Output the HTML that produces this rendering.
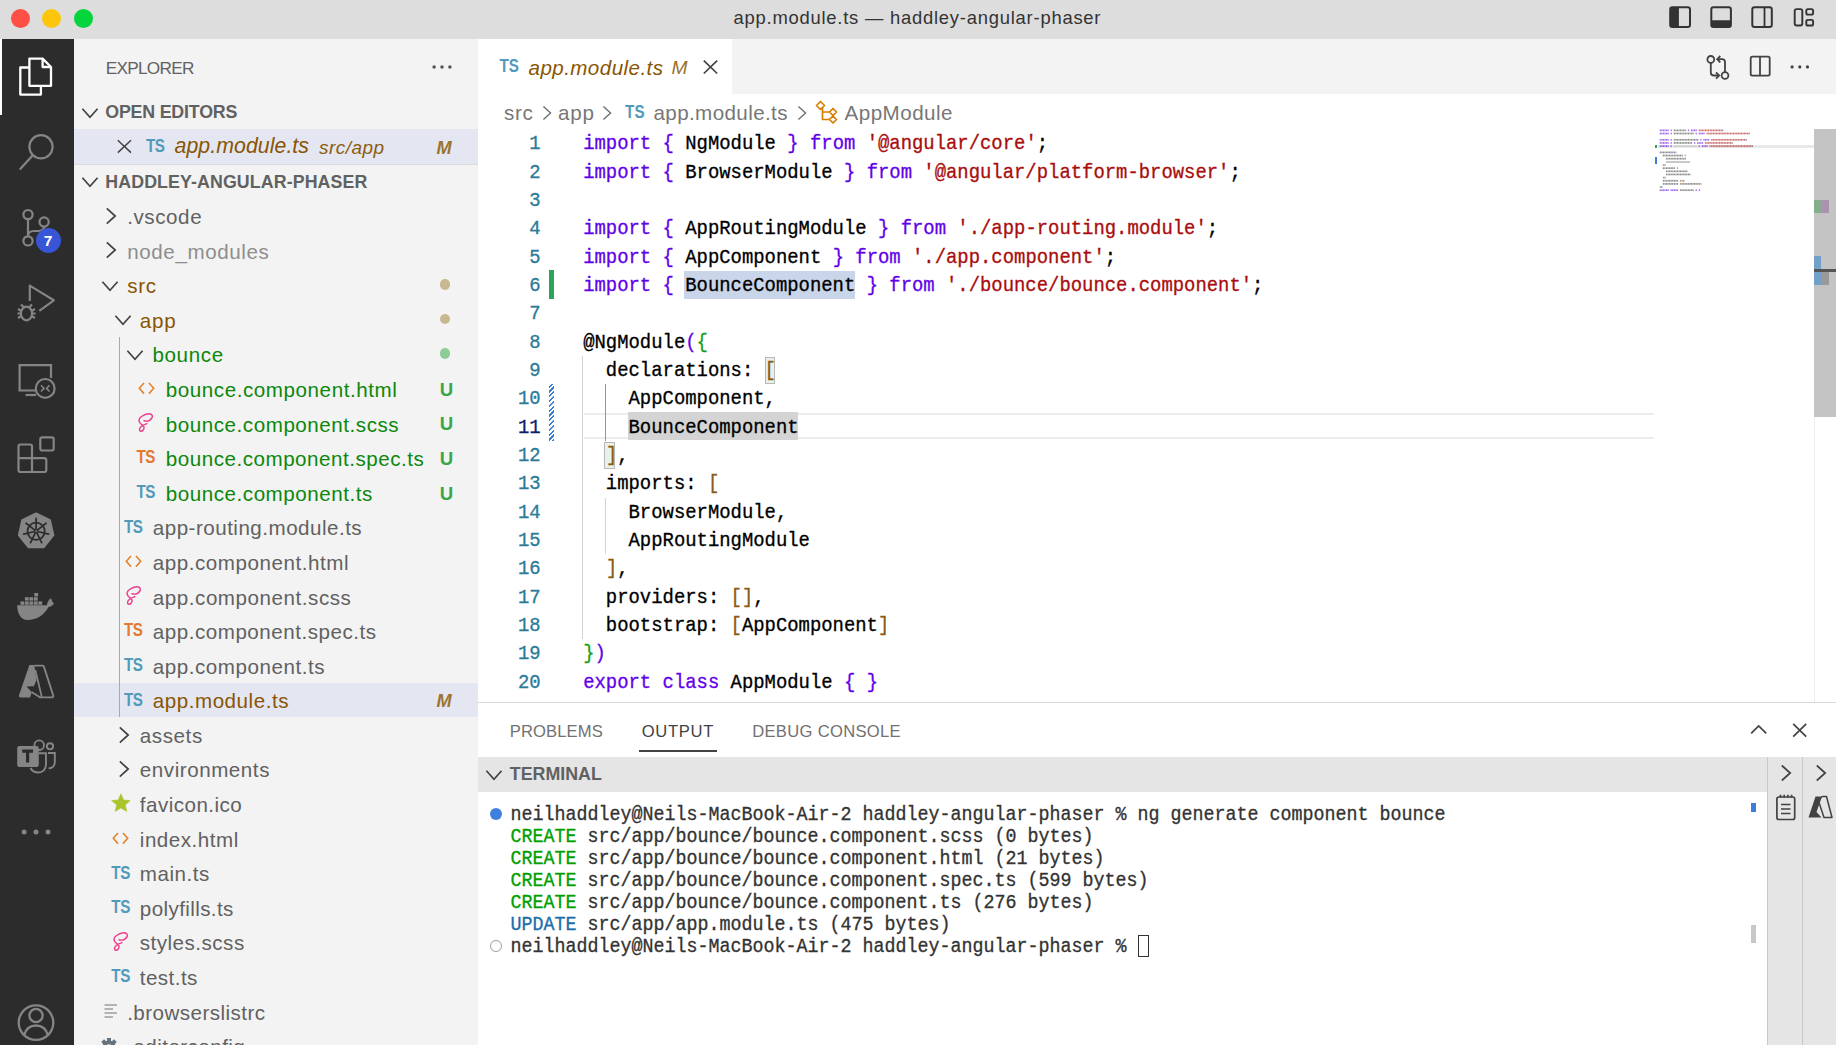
<!DOCTYPE html>
<html><head><meta charset="utf-8"><title>VS Code</title>
<style>
html,body{margin:0;padding:0;}
body{width:1836px;height:1045px;overflow:hidden;position:relative;background:#fff;font-family:'Liberation Sans', sans-serif;}
svg{display:block}
</style></head><body>
<div style="position:absolute;left:0px;top:0px;width:1836px;height:39px;background:#dddddd;"></div>
<div style="position:absolute;left:0px;top:39px;width:74px;height:1006px;background:#2c2c2c;"></div>
<div style="position:absolute;left:0px;top:39px;width:2px;height:76px;background:#ffffff;"></div>
<div style="position:absolute;left:74px;top:39px;width:404px;height:1006px;background:#f3f3f3;"></div>
<div style="position:absolute;left:478px;top:39px;width:1358px;height:55px;background:#f3f3f3;"></div>
<div style="position:absolute;left:478px;top:39px;width:254px;height:55px;background:#ffffff;"></div>
<div style="position:absolute;left:11.0px;top:9.2px;width:19px;height:19px;border-radius:50%;background:#fe5047"></div>
<div style="position:absolute;left:42.4px;top:9.2px;width:19px;height:19px;border-radius:50%;background:#fdc50b"></div>
<div style="position:absolute;left:73.9px;top:9.2px;width:19px;height:19px;border-radius:50%;background:#05d53d"></div>
<div style="position:absolute;left:733.5px;top:7.948px;line-height:20.553px;font:normal 400 18.4px 'Liberation Sans', sans-serif;line-height:20.553px;color:#333333;white-space:pre;letter-spacing:0.773px;">app.module.ts — haddley-angular-phaser</div>
<svg style="position:absolute;left:1660px;top:0px;overflow:visible" width="176" height="39" viewBox="1660 0 176 39">
<rect x="1670.2" y="7.3" width="19.8" height="19.6" rx="2.2" fill="none" stroke="#333333" stroke-width="2"/>
<rect x="1670.2" y="7.3" width="8.7" height="19.6" rx="1" fill="#333333"/>
<rect x="1711.3" y="7.3" width="19.6" height="19.6" rx="2.2" fill="none" stroke="#333333" stroke-width="2"/>
<rect x="1711.3" y="20.3" width="19.6" height="6.6" rx="1" fill="#333333"/>
<rect x="1752.3" y="7.3" width="19.5" height="19.6" rx="2.2" fill="none" stroke="#333333" stroke-width="2"/>
<line x1="1764.5" y1="7.3" x2="1764.5" y2="26.9" stroke="#333333" stroke-width="1.8"/>
<rect x="1794.7" y="9.1" width="7.6" height="16.4" rx="2" fill="none" stroke="#333333" stroke-width="1.9"/>
<rect x="1806.3" y="9.1" width="6.8" height="5.5" rx="1.6" fill="none" stroke="#333333" stroke-width="1.9"/>
<rect x="1806.3" y="19.9" width="6.8" height="5.6" rx="1.6" fill="none" stroke="#333333" stroke-width="1.9"/>
</svg>
<svg style="position:absolute;left:0px;top:39px;overflow:visible" width="74" height="1006" viewBox="0 39 74 1006">
<g fill="none" stroke="#ffffff" stroke-width="2.3" stroke-linejoin="round">
 <path d="M29.4 67.5 H20.3 V94.6 H40.9 V85.8"/>
 <path d="M29.4 58.6 H42.6 L51 67 V85.8 H29.4 Z"/>
 <path d="M42.6 58.6 V67 H51"/>
</g>
<g fill="none" stroke="#858585" stroke-width="2.2">
 <circle cx="41" cy="146.8" r="11.6"/>
 <line x1="33" y1="155" x2="19.8" y2="169.5"/>
 <circle cx="28" cy="214.6" r="4.6"/>
 <circle cx="44.1" cy="222" r="4.6"/>
 <circle cx="28" cy="240.9" r="4.6"/>
 <line x1="28" y1="219.2" x2="28" y2="236.3"/>
 <path d="M44.1 226.6 C44.1 231 40 231 34 231 C30 231 28 233 28 236.3"/>
 <path d="M29.8 301 V285.6 L53.8 300.3 L39.3 310.8" stroke-linejoin="round"/>
 <ellipse cx="26.5" cy="313.5" rx="5.6" ry="6.8"/>
 <path d="M18 309 L21.5 311 M18 318 L21.5 316 M35 309 L31.5 311 M35 318 L31.5 316 M21 304.5 L23.5 307 M32 304.5 L29.5 307 M17.5 313.5 H20.9 M32.1 313.5 H35.5"/>
 <path d="M37 390.5 H19.6 V365.2 H51 V378"/>
 <line x1="25.5" y1="395" x2="36" y2="395"/>
 <circle cx="45.2" cy="388.4" r="9.4"/>
 <path d="M41 385.3 L44 388.4 L41 391.5 M49.5 385.3 L46.5 388.4 L49.5 391.5" stroke-width="1.6"/>
 <path d="M20.5 444.5 H30 Q32 444.5 32 446.5 V458.2 H44.3 Q46.3 458.2 46.3 460.2 V470 Q46.3 472 44.3 472 H20.5 Q18.5 472 18.5 470 V446.5 Q18.5 444.5 20.5 444.5 Z M18.5 458.2 H32 V472"/>
 <rect x="40.3" y="437.3" width="13.4" height="13.2" rx="2"/>
</g>
<polygon points="36.10,513.60 49.86,520.23 53.26,535.12 43.74,547.06 28.46,547.06 18.94,535.12 22.34,520.23" fill="#858585" stroke="#858585" stroke-width="2.2" stroke-linejoin="round"/>
<g fill="none" stroke="#2c2c2c" stroke-width="1.7" stroke-linecap="round">
 <circle cx="36.1" cy="531.2" r="8.6"/>
 <path d="M36.10 528.80 L36.10 518.40 M37.98 529.70 L46.11 523.22 M38.44 531.73 L48.58 534.05 M37.14 533.36 L41.65 542.73 M35.06 533.36 L30.55 542.73 M33.76 531.73 L23.62 534.05 M34.22 529.70 L26.09 523.22"/>
 <circle cx="36.1" cy="531.2" r="1.6" stroke-width="1.4"/>
</g>
<g fill="#858585">
 <path d="M17.2 605.2 H46.8 C47.6 601.5 49.5 599 51 598.3 C51.8 600.5 52.4 602.3 54 603.6 C52.6 605.8 50.6 606.9 48.3 607.2 C44.5 614.5 37 620 27.5 620 C20.5 620 17.2 613 17.2 605.2 Z"/>
 <rect x="20.4" y="601.4" width="3.8" height="3.4"/><rect x="24.9" y="601.4" width="3.8" height="3.4"/><rect x="29.4" y="601.4" width="3.8" height="3.4"/><rect x="33.9" y="601.4" width="3.8" height="3.4"/><rect x="38.4" y="601.4" width="3.8" height="3.4"/>
 <rect x="24.9" y="597.2" width="3.8" height="3.4"/><rect x="29.4" y="597.2" width="3.8" height="3.4"/><rect x="33.9" y="597.2" width="3.8" height="3.4"/>
 <rect x="34.3" y="593" width="3.8" height="3.4"/>
 <path d="M29.4 664.9 H34.3 L36.5 680.2 L33.8 686.2 L26.6 686.4 L31.8 692.2 L30 697.5 H20.6 C19.3 697.5 18.6 696.4 19.1 695 Z"/>
</g>
<path d="M34.2 665.7 H42.6 C43.2 665.7 43.6 666 43.9 666.6 L53.2 695.4 C53.5 696.5 53 697.4 52 697.4 H40.2 L31.6 692 M35.3 670 L41.9 697.4" fill="none" stroke="#858585" stroke-width="1.8" stroke-linejoin="round"/>
<g fill="#858585">
 <rect x="17.2" y="746" width="21.6" height="21" rx="2.2"/>
</g>
<path d="M22.2 751.2 H33 M27.6 751.2 V762.5" stroke="#2c2c2c" stroke-width="3.2"/>
<g fill="none" stroke="#858585" stroke-width="1.9">
 <circle cx="39.2" cy="745.2" r="4.8"/>
 <circle cx="50" cy="746.3" r="3.1"/>
 <path d="M38.8 753.2 H46 V764.5 C46 769.5 42.5 772.5 38.5 772.5 C34.5 772.5 31.5 770 30.5 768"/>
 <path d="M48 753 H54.8 V762 C54.8 766.5 52 768.5 48.6 768.3"/>
</g>
<circle cx="24.1" cy="832" r="2.5" fill="#858585"/>
<circle cx="36" cy="832" r="2.5" fill="#858585"/>
<circle cx="48" cy="832" r="2.5" fill="#858585"/>
<g fill="none" stroke="#858585" stroke-width="2.3">
 <circle cx="36" cy="1022.6" r="17.3"/>
 <circle cx="36" cy="1015.5" r="6.6"/>
 <path d="M24 1035.5 C26 1028 30 1025.5 36 1025.5 C42 1025.5 46 1028 48 1035.5"/>
</g>
</svg>
<div style="position:absolute;left:36.2px;top:228.1px;width:25.2px;height:25.2px;border-radius:50%;background:#3855d6"></div>
<div style="position:absolute;left:43.8px;top:232.373px;line-height:17.314px;font:normal 700 15.5px 'Liberation Sans', sans-serif;line-height:17.314px;color:#ffffff;white-space:pre;">7</div>
<div style="position:absolute;left:105.8px;top:59.434px;line-height:19.212px;font:normal 400 17.2px 'Liberation Sans', sans-serif;line-height:19.212px;color:#616161;white-space:pre;letter-spacing:-0.73px;">EXPLORER</div>
<svg style="position:absolute;left:420px;top:55px;overflow:visible" width="50" height="24" viewBox="0 0 50 24"><circle cx="14.100000000000023" cy="11.9" r="1.75" fill="#555555"/><circle cx="22.0" cy="11.9" r="1.75" fill="#555555"/><circle cx="29.899999999999977" cy="11.9" r="1.75" fill="#555555"/></svg>
<svg style="position:absolute;left:79.8px;top:102.5px;overflow:visible" width="20" height="20" viewBox="0 0 20 20"><path d="M2.4000000000000004 5.8 L10 14.2 L17.6 5.8" fill="none" stroke="#424242" stroke-width="1.7"/></svg>
<div style="position:absolute;left:105.3px;top:103.191px;line-height:19.883px;font:normal 700 17.8px 'Liberation Sans', sans-serif;line-height:19.883px;color:#616161;white-space:pre;letter-spacing:-0.186px;">OPEN EDITORS</div>
<div style="position:absolute;left:74px;top:129px;width:404px;height:35px;background:#e4e6f1;"></div>
<div style="position:absolute;left:74px;top:163.6px;width:404px;height:1.2px;background:#d9d9e0;"></div>
<svg style="position:absolute;left:114px;top:137px;overflow:visible" width="20" height="20" viewBox="0 0 20 20"><path d="M3.8 3.2 L17 15.6 M17 3.2 L3.8 15.6" stroke="#424242" stroke-width="1.45"/></svg>
<div style="position:absolute;left:146px;top:137.644px;line-height:16.978px;font:normal 700 15.2px 'Liberation Sans', sans-serif;line-height:16.978px;color:#519aba;white-space:pre;letter-spacing:-0.422px;transform:scaleY(1.16);transform-origin:0 81%">TS</div>
<div style="position:absolute;left:174.5px;top:134.624px;line-height:23.792px;font:italic 400 21.3px 'Liberation Sans', sans-serif;line-height:23.792px;color:#895503;white-space:pre;letter-spacing:0.059px;">app.module.ts</div>
<div style="position:absolute;left:319px;top:136.705px;line-height:21.223px;font:italic 400 19.0px 'Liberation Sans', sans-serif;line-height:21.223px;color:#895503;white-space:pre;letter-spacing:0.448px;opacity:.95">src/app</div>
<div style="position:absolute;left:436.6px;top:137.729px;line-height:20.329px;font:italic 700 18.2px 'Liberation Sans', sans-serif;line-height:20.329px;color:#9b7430;white-space:pre;">M</div>
<svg style="position:absolute;left:79.8px;top:171.5px;overflow:visible" width="20" height="20" viewBox="0 0 20 20"><path d="M2.4000000000000004 5.8 L10 14.2 L17.6 5.8" fill="none" stroke="#424242" stroke-width="1.7"/></svg>
<div style="position:absolute;left:105.3px;top:172.991px;line-height:19.883px;font:normal 700 17.8px 'Liberation Sans', sans-serif;line-height:19.883px;color:#616161;white-space:pre;letter-spacing:0.104px;">HADDLEY-ANGULAR-PHASER</div>
<div style="position:absolute;left:74px;top:682.86px;width:404px;height:34.59px;background:#e4e6f1;"></div>
<div style="position:absolute;left:118.5px;top:336.96000000000004px;width:1.3px;height:380.49px;background:#a9a9a9;"></div>
<svg style="position:absolute;left:101px;top:205.89499999999998px;overflow:visible" width="20" height="20" viewBox="0 0 20 20"><path d="M5.8 2.4000000000000004 L14.2 10 L5.8 17.6" fill="none" stroke="#424242" stroke-width="1.7"/></svg>
<div style="position:absolute;left:127.19999999999999px;top:205.052px;line-height:23.01px;font:normal 400 20.6px 'Liberation Sans', sans-serif;line-height:23.01px;color:#616161;white-space:pre;letter-spacing:0.573px;">.vscode</div>
<svg style="position:absolute;left:101px;top:240.485px;overflow:visible" width="20" height="20" viewBox="0 0 20 20"><path d="M5.8 2.4000000000000004 L14.2 10 L5.8 17.6" fill="none" stroke="#424242" stroke-width="1.7"/></svg>
<div style="position:absolute;left:127.19999999999999px;top:239.642px;line-height:23.01px;font:normal 400 20.6px 'Liberation Sans', sans-serif;line-height:23.01px;color:#8e8e8e;white-space:pre;letter-spacing:0.597px;">node_modules</div>
<svg style="position:absolute;left:100px;top:275.575px;overflow:visible" width="20" height="20" viewBox="0 0 20 20"><path d="M2.4000000000000004 5.8 L10 14.2 L17.6 5.8" fill="none" stroke="#424242" stroke-width="1.7"/></svg>
<div style="position:absolute;left:127.19999999999999px;top:274.232px;line-height:23.01px;font:normal 400 20.6px 'Liberation Sans', sans-serif;line-height:23.01px;color:#895503;white-space:pre;letter-spacing:0.672px;">src</div>
<div style="position:absolute;left:439.90000000000003px;top:279.275px;width:10.4px;height:10.4px;border-radius:50%;background:#c8b88f"></div>
<svg style="position:absolute;left:112.5px;top:310.165px;overflow:visible" width="20" height="20" viewBox="0 0 20 20"><path d="M2.4000000000000004 5.8 L10 14.2 L17.6 5.8" fill="none" stroke="#424242" stroke-width="1.7"/></svg>
<div style="position:absolute;left:139.79999999999998px;top:308.822px;line-height:23.01px;font:normal 400 20.6px 'Liberation Sans', sans-serif;line-height:23.01px;color:#895503;white-space:pre;letter-spacing:0.828px;">app</div>
<div style="position:absolute;left:439.90000000000003px;top:313.865px;width:10.4px;height:10.4px;border-radius:50%;background:#c8b88f"></div>
<svg style="position:absolute;left:125.30000000000001px;top:344.75500000000005px;overflow:visible" width="20" height="20" viewBox="0 0 20 20"><path d="M2.4000000000000004 5.8 L10 14.2 L17.6 5.8" fill="none" stroke="#424242" stroke-width="1.7"/></svg>
<div style="position:absolute;left:152.4px;top:343.412px;line-height:23.01px;font:normal 400 20.6px 'Liberation Sans', sans-serif;line-height:23.01px;color:#0c880c;white-space:pre;letter-spacing:0.656px;">bounce</div>
<div style="position:absolute;left:439.90000000000003px;top:348.45500000000004px;width:10.4px;height:10.4px;border-radius:50%;background:#8fcc95"></div>
<svg style="position:absolute;left:137.5px;top:382.345px;overflow:visible" width="17" height="13" viewBox="0 0 17 13"><path d="M6 1 L1.3 6.3 L6 11.6 M11 1 L15.7 6.3 L11 11.6" fill="none" stroke="#e0852c" stroke-width="1.6"/></svg>
<div style="position:absolute;left:165.79999999999998px;top:378.002px;line-height:23.01px;font:normal 400 20.6px 'Liberation Sans', sans-serif;line-height:23.01px;color:#0c880c;white-space:pre;letter-spacing:0.559px;">bounce.component.html</div>
<div style="position:absolute;left:439.8px;top:379.812px;line-height:20.776px;font:normal 700 18.6px 'Liberation Sans', sans-serif;line-height:20.776px;color:#3aa64a;white-space:pre;">U</div>
<svg style="position:absolute;left:138.3px;top:414.435px;overflow:visible" width="16" height="18" viewBox="0 0 16 18"><path d="M6 6.8 C8 7.3 10 7.3 11.5 6.3 C14 4.6 15.5 2.2 13.5 0.5 C11 -0.8 6.5 0.5 3.5 2.5 C0.5 4.5 0.3 7.5 2.5 9.5 C4 10.8 5.5 11.6 6 13 C6.5 15 4.5 17.5 2.8 17.2 C1 16.8 1.2 14.5 3 12.8 C4.5 11.3 7 10.2 8.9 9.6" fill="none" stroke="#ec3d8a" stroke-width="1.45" stroke-linecap="round"/></svg>
<div style="position:absolute;left:165.79999999999998px;top:412.592px;line-height:23.01px;font:normal 400 20.6px 'Liberation Sans', sans-serif;line-height:23.01px;color:#0c880c;white-space:pre;letter-spacing:0.539px;">bounce.component.scss</div>
<div style="position:absolute;left:439.8px;top:414.402px;line-height:20.776px;font:normal 700 18.6px 'Liberation Sans', sans-serif;line-height:20.776px;color:#3aa64a;white-space:pre;">U</div>
<div style="position:absolute;left:136.5px;top:449.469px;line-height:16.978px;font:normal 700 15.2px 'Liberation Sans', sans-serif;line-height:16.978px;color:#e37933;white-space:pre;letter-spacing:-0.422px;transform:scaleY(1.16);transform-origin:0 81%">TS</div>
<div style="position:absolute;left:165.79999999999998px;top:447.182px;line-height:23.01px;font:normal 400 20.6px 'Liberation Sans', sans-serif;line-height:23.01px;color:#0c880c;white-space:pre;letter-spacing:0.516px;">bounce.component.spec.ts</div>
<div style="position:absolute;left:439.8px;top:448.992px;line-height:20.776px;font:normal 700 18.6px 'Liberation Sans', sans-serif;line-height:20.776px;color:#3aa64a;white-space:pre;">U</div>
<div style="position:absolute;left:136.5px;top:484.059px;line-height:16.978px;font:normal 700 15.2px 'Liberation Sans', sans-serif;line-height:16.978px;color:#519aba;white-space:pre;letter-spacing:-0.422px;transform:scaleY(1.16);transform-origin:0 81%">TS</div>
<div style="position:absolute;left:165.79999999999998px;top:481.772px;line-height:23.01px;font:normal 400 20.6px 'Liberation Sans', sans-serif;line-height:23.01px;color:#0c880c;white-space:pre;letter-spacing:0.531px;">bounce.component.ts</div>
<div style="position:absolute;left:439.8px;top:483.582px;line-height:20.776px;font:normal 700 18.6px 'Liberation Sans', sans-serif;line-height:20.776px;color:#3aa64a;white-space:pre;">U</div>
<div style="position:absolute;left:124px;top:518.649px;line-height:16.978px;font:normal 700 15.2px 'Liberation Sans', sans-serif;line-height:16.978px;color:#519aba;white-space:pre;letter-spacing:-0.422px;transform:scaleY(1.16);transform-origin:0 81%">TS</div>
<div style="position:absolute;left:152.79999999999998px;top:516.362px;line-height:23.01px;font:normal 400 20.6px 'Liberation Sans', sans-serif;line-height:23.01px;color:#616161;white-space:pre;letter-spacing:0.484px;">app-routing.module.ts</div>
<svg style="position:absolute;left:125px;top:555.295px;overflow:visible" width="17" height="13" viewBox="0 0 17 13"><path d="M6 1 L1.3 6.3 L6 11.6 M11 1 L15.7 6.3 L11 11.6" fill="none" stroke="#e0852c" stroke-width="1.6"/></svg>
<div style="position:absolute;left:152.79999999999998px;top:550.952px;line-height:23.01px;font:normal 400 20.6px 'Liberation Sans', sans-serif;line-height:23.01px;color:#616161;white-space:pre;letter-spacing:0.533px;">app.component.html</div>
<svg style="position:absolute;left:125.8px;top:587.385px;overflow:visible" width="16" height="18" viewBox="0 0 16 18"><path d="M6 6.8 C8 7.3 10 7.3 11.5 6.3 C14 4.6 15.5 2.2 13.5 0.5 C11 -0.8 6.5 0.5 3.5 2.5 C0.5 4.5 0.3 7.5 2.5 9.5 C4 10.8 5.5 11.6 6 13 C6.5 15 4.5 17.5 2.8 17.2 C1 16.8 1.2 14.5 3 12.8 C4.5 11.3 7 10.2 8.9 9.6" fill="none" stroke="#ec3d8a" stroke-width="1.45" stroke-linecap="round"/></svg>
<div style="position:absolute;left:152.79999999999998px;top:585.542px;line-height:23.01px;font:normal 400 20.6px 'Liberation Sans', sans-serif;line-height:23.01px;color:#616161;white-space:pre;letter-spacing:0.54px;">app.component.scss</div>
<div style="position:absolute;left:124px;top:622.419px;line-height:16.978px;font:normal 700 15.2px 'Liberation Sans', sans-serif;line-height:16.978px;color:#e37933;white-space:pre;letter-spacing:-0.422px;transform:scaleY(1.16);transform-origin:0 81%">TS</div>
<div style="position:absolute;left:152.79999999999998px;top:620.132px;line-height:23.01px;font:normal 400 20.6px 'Liberation Sans', sans-serif;line-height:23.01px;color:#616161;white-space:pre;letter-spacing:0.517px;">app.component.spec.ts</div>
<div style="position:absolute;left:124px;top:657.009px;line-height:16.978px;font:normal 700 15.2px 'Liberation Sans', sans-serif;line-height:16.978px;color:#519aba;white-space:pre;letter-spacing:-0.422px;transform:scaleY(1.16);transform-origin:0 81%">TS</div>
<div style="position:absolute;left:152.79999999999998px;top:654.722px;line-height:23.01px;font:normal 400 20.6px 'Liberation Sans', sans-serif;line-height:23.01px;color:#616161;white-space:pre;letter-spacing:0.53px;">app.component.ts</div>
<div style="position:absolute;left:124px;top:691.599px;line-height:16.978px;font:normal 700 15.2px 'Liberation Sans', sans-serif;line-height:16.978px;color:#519aba;white-space:pre;letter-spacing:-0.422px;transform:scaleY(1.16);transform-origin:0 81%">TS</div>
<div style="position:absolute;left:152.79999999999998px;top:689.312px;line-height:23.01px;font:normal 400 20.6px 'Liberation Sans', sans-serif;line-height:23.01px;color:#895503;white-space:pre;letter-spacing:0.523px;">app.module.ts</div>
<div style="position:absolute;left:436.6px;top:691.484px;line-height:20.329px;font:italic 700 18.2px 'Liberation Sans', sans-serif;line-height:20.329px;color:#9b7430;white-space:pre;">M</div>
<svg style="position:absolute;left:113.5px;top:724.745px;overflow:visible" width="20" height="20" viewBox="0 0 20 20"><path d="M5.8 2.4000000000000004 L14.2 10 L5.8 17.6" fill="none" stroke="#424242" stroke-width="1.7"/></svg>
<div style="position:absolute;left:139.79999999999998px;top:723.902px;line-height:23.01px;font:normal 400 20.6px 'Liberation Sans', sans-serif;line-height:23.01px;color:#616161;white-space:pre;letter-spacing:0.578px;">assets</div>
<svg style="position:absolute;left:113.5px;top:759.335px;overflow:visible" width="20" height="20" viewBox="0 0 20 20"><path d="M5.8 2.4000000000000004 L14.2 10 L5.8 17.6" fill="none" stroke="#424242" stroke-width="1.7"/></svg>
<div style="position:absolute;left:139.79999999999998px;top:758.492px;line-height:23.01px;font:normal 400 20.6px 'Liberation Sans', sans-serif;line-height:23.01px;color:#616161;white-space:pre;letter-spacing:0.547px;">environments</div>
<svg style="position:absolute;left:110.8px;top:793.1250000000001px;overflow:visible" width="20" height="20" viewBox="0 0 20 20"><path d="M9.9 0.8 L12.6 7 L19.2 7.6 L14.2 11.9 L15.8 18.4 L9.9 15 L4.1 18.4 L5.7 11.9 L0.6 7.6 L7.3 7 Z" fill="#a8c62c" stroke="#a8c62c" stroke-width="0.6" stroke-linejoin="round"/></svg>
<div style="position:absolute;left:139.79999999999998px;top:793.082px;line-height:23.01px;font:normal 400 20.6px 'Liberation Sans', sans-serif;line-height:23.01px;color:#616161;white-space:pre;letter-spacing:0.472px;">favicon.ico</div>
<svg style="position:absolute;left:112.3px;top:832.0150000000001px;overflow:visible" width="17" height="13" viewBox="0 0 17 13"><path d="M6 1 L1.3 6.3 L6 11.6 M11 1 L15.7 6.3 L11 11.6" fill="none" stroke="#e0852c" stroke-width="1.6"/></svg>
<div style="position:absolute;left:139.79999999999998px;top:827.672px;line-height:23.01px;font:normal 400 20.6px 'Liberation Sans', sans-serif;line-height:23.01px;color:#616161;white-space:pre;letter-spacing:0.507px;">index.html</div>
<div style="position:absolute;left:111.3px;top:864.549px;line-height:16.978px;font:normal 700 15.2px 'Liberation Sans', sans-serif;line-height:16.978px;color:#519aba;white-space:pre;letter-spacing:-0.422px;transform:scaleY(1.16);transform-origin:0 81%">TS</div>
<div style="position:absolute;left:139.79999999999998px;top:862.262px;line-height:23.01px;font:normal 400 20.6px 'Liberation Sans', sans-serif;line-height:23.01px;color:#616161;white-space:pre;letter-spacing:0.536px;">main.ts</div>
<div style="position:absolute;left:111.3px;top:899.139px;line-height:16.978px;font:normal 700 15.2px 'Liberation Sans', sans-serif;line-height:16.978px;color:#519aba;white-space:pre;letter-spacing:-0.422px;transform:scaleY(1.16);transform-origin:0 81%">TS</div>
<div style="position:absolute;left:139.79999999999998px;top:896.852px;line-height:23.01px;font:normal 400 20.6px 'Liberation Sans', sans-serif;line-height:23.01px;color:#616161;white-space:pre;letter-spacing:0.395px;">polyfills.ts</div>
<svg style="position:absolute;left:113px;top:933.2850000000001px;overflow:visible" width="16" height="18" viewBox="0 0 16 18"><path d="M6 6.8 C8 7.3 10 7.3 11.5 6.3 C14 4.6 15.5 2.2 13.5 0.5 C11 -0.8 6.5 0.5 3.5 2.5 C0.5 4.5 0.3 7.5 2.5 9.5 C4 10.8 5.5 11.6 6 13 C6.5 15 4.5 17.5 2.8 17.2 C1 16.8 1.2 14.5 3 12.8 C4.5 11.3 7 10.2 8.9 9.6" fill="none" stroke="#ec3d8a" stroke-width="1.45" stroke-linecap="round"/></svg>
<div style="position:absolute;left:139.79999999999998px;top:931.442px;line-height:23.01px;font:normal 400 20.6px 'Liberation Sans', sans-serif;line-height:23.01px;color:#616161;white-space:pre;letter-spacing:0.483px;">styles.scss</div>
<div style="position:absolute;left:111.3px;top:968.319px;line-height:16.978px;font:normal 700 15.2px 'Liberation Sans', sans-serif;line-height:16.978px;color:#519aba;white-space:pre;letter-spacing:-0.422px;transform:scaleY(1.16);transform-origin:0 81%">TS</div>
<div style="position:absolute;left:139.79999999999998px;top:966.032px;line-height:23.01px;font:normal 400 20.6px 'Liberation Sans', sans-serif;line-height:23.01px;color:#616161;white-space:pre;letter-spacing:0.445px;">test.ts</div>
<svg style="position:absolute;left:104px;top:1004.465px;overflow:visible" width="15" height="14" viewBox="0 0 15 14"><path d="M0.5 1 H13 M0.5 5 H9 M0.5 9 H13 M0.5 13 H9" stroke="#a0a0a0" stroke-width="1.7"/></svg>
<div style="position:absolute;left:127.19999999999999px;top:1000.622px;line-height:23.01px;font:normal 400 20.6px 'Liberation Sans', sans-serif;line-height:23.01px;color:#616161;white-space:pre;letter-spacing:0.456px;">.browserslistrc</div>
<svg style="position:absolute;left:99px;top:1037.055px;overflow:visible" width="20" height="20" viewBox="0 0 20 20"><g fill="#65737e"><circle cx="10" cy="10" r="6.5"/><rect x="8" y="1" width="4" height="18"/><rect x="1" y="8" width="18" height="4"/><rect x="8" y="1" width="4" height="18" transform="rotate(45 10 10)"/><rect x="8" y="1" width="4" height="18" transform="rotate(-45 10 10)"/></g><circle cx="10" cy="10" r="2.8" fill="#f3f3f3"/></svg>
<div style="position:absolute;left:127.19999999999999px;top:1035.212px;line-height:23.01px;font:normal 400 20.6px 'Liberation Sans', sans-serif;line-height:23.01px;color:#616161;white-space:pre;letter-spacing:0.453px;">.editorconfig</div>
<div style="position:absolute;left:499.5px;top:58.344px;line-height:16.978px;font:normal 700 15.2px 'Liberation Sans', sans-serif;line-height:16.978px;color:#519aba;white-space:pre;letter-spacing:0.078px;transform:scaleY(1.16);transform-origin:0 81%">TS</div>
<div style="position:absolute;left:528.5px;top:56.257px;line-height:23.01px;font:italic 400 20.6px 'Liberation Sans', sans-serif;line-height:23.01px;color:#895503;white-space:pre;letter-spacing:0.427px;">app.module.ts</div>
<div style="position:absolute;left:671.5px;top:56.524px;line-height:21.446px;font:italic 400 19.2px 'Liberation Sans', sans-serif;line-height:21.446px;color:#9a6f2a;white-space:pre;">M</div>
<svg style="position:absolute;left:700px;top:57px;overflow:visible" width="20" height="20" viewBox="0 0 20 20"><path d="M3.8 3.7 L17.2 16.5 M17.2 3.7 L3.8 16.5" stroke="#424242" stroke-width="1.7"/></svg>
<svg style="position:absolute;left:1700px;top:50px;overflow:visible" width="136" height="36" viewBox="0 0 136 36">
<g fill="none" stroke="#424242" stroke-width="1.8">
 <circle cx="10.8" cy="9.4" r="3.4"/>
 <path d="M10.8 12.8 V22.5 C10.8 24.5 12 25.5 14 25.5 H19"/>
 <path d="M16 22.3 L19.2 25.5 L16 28.7"/>
 <circle cx="25" cy="25.5" r="3.4"/>
 <path d="M25 22.1 V12 C25 10 24 9.2 22 9.2 H17.5"/>
 <path d="M20.3 6 L17.2 9.2 L20.3 12.4"/>
 <rect x="50.7" y="6.6" width="19" height="19" rx="1.6"/>
 <line x1="60" y1="6.6" x2="60" y2="25.6"/>
</g>
<circle cx="92.1" cy="16.9" r="1.6" fill="#424242"/><circle cx="99.8" cy="16.9" r="1.6" fill="#424242"/><circle cx="107.5" cy="16.9" r="1.6" fill="#424242"/>
</svg>
<div style="position:absolute;left:504px;top:100.957px;line-height:23.01px;font:normal 400 20.6px 'Liberation Sans', sans-serif;line-height:23.01px;color:#777777;white-space:pre;letter-spacing:0.672px;">src</div>
<svg style="position:absolute;left:536.5px;top:103px;overflow:visible" width="20" height="20" viewBox="0 0 20 20"><path d="M6.4 3.4000000000000004 L13.6 10 L6.4 16.6" fill="none" stroke="#6f6f6f" stroke-width="1.4"/></svg>
<div style="position:absolute;left:558px;top:100.957px;line-height:23.01px;font:normal 400 20.6px 'Liberation Sans', sans-serif;line-height:23.01px;color:#777777;white-space:pre;letter-spacing:0.828px;">app</div>
<svg style="position:absolute;left:597px;top:103px;overflow:visible" width="20" height="20" viewBox="0 0 20 20"><path d="M6.4 3.4000000000000004 L13.6 10 L6.4 16.6" fill="none" stroke="#6f6f6f" stroke-width="1.4"/></svg>
<div style="position:absolute;left:625px;top:104.044px;line-height:16.978px;font:normal 700 15.2px 'Liberation Sans', sans-serif;line-height:16.978px;color:#519aba;white-space:pre;letter-spacing:0.178px;transform:scaleY(1.16);transform-origin:0 81%">TS</div>
<div style="position:absolute;left:653.5px;top:100.957px;line-height:23.01px;font:normal 400 20.6px 'Liberation Sans', sans-serif;line-height:23.01px;color:#777777;white-space:pre;letter-spacing:0.385px;">app.module.ts</div>
<svg style="position:absolute;left:791.7px;top:103px;overflow:visible" width="20" height="20" viewBox="0 0 20 20"><path d="M6.4 3.4000000000000004 L13.6 10 L6.4 16.6" fill="none" stroke="#6f6f6f" stroke-width="1.4"/></svg>
<svg style="position:absolute;left:814px;top:100px;overflow:visible" width="26" height="24" viewBox="0 0 26 24"><g fill="none" stroke="#d67e00" stroke-width="1.7" stroke-linejoin="round"><path d="M2.5 5.5 L6.5 1.5 L10.5 5.5 L6.5 9.5 Z"/><path d="M15.5 12 L19 8.5 L22.5 12 L19 15.5 Z"/><path d="M15.5 19.5 L19 16 L22.5 19.5 L19 23 Z"/><path d="M8.5 7.5 V19.5 H15.8 M8.5 12 H15.8"/></g></svg>
<div style="position:absolute;left:844.5px;top:100.957px;line-height:23.01px;font:normal 400 20.6px 'Liberation Sans', sans-serif;line-height:23.01px;color:#777777;white-space:pre;letter-spacing:0.477px;">AppModule</div>
<div style="position:absolute;left:584px;top:413.4px;width:1070px;height:2px;background:#ececec;"></div>
<div style="position:absolute;left:584px;top:437.42999999999995px;width:1070px;height:2px;background:#ececec;"></div>
<div style="position:absolute;left:582.3px;top:355.94px;width:1.2px;height:283.29999999999995px;background:#d3d3d3;"></div>
<div style="position:absolute;left:605.2px;top:384.27px;width:1.2px;height:56.66px;background:#939393;"></div>
<div style="position:absolute;left:605.2px;top:497.59px;width:1.2px;height:56.66px;background:#d3d3d3;"></div>
<div style="position:absolute;left:684.3px;top:271.25px;width:170.4px;height:27.729999999999997px;background:#c9d5e8;"></div>
<div style="position:absolute;left:628.0px;top:412.29999999999995px;width:170.1px;height:28.13px;background:#d4d4d4;"></div>
<div style="position:absolute;left:765.3px;top:356.54px;width:10.2px;height:27.3px;background:#e8f2e8;box-sizing:border-box;border:1px solid #b8b8b8"></div>
<div style="position:absolute;left:604.2px;top:441.53000000000003px;width:10.4px;height:27.3px;background:#e8f2e8;box-sizing:border-box;border:1px solid #b8b8b8"></div>
<div style="position:absolute;left:548.8px;top:270.15px;width:5px;height:28.5px;background:#2ea45a;"></div>
<div style="position:absolute;left:548.8px;top:383.96999999999997px;width:5px;height:56.959999999999994px;background:repeating-linear-gradient(-45deg,#3b7fd6 0px,#3b7fd6 1.6px,#ffffff 1.6px,#ffffff 3.4px)"></div>
<div style="position:absolute;left:529.26px;top:134.231px;line-height:21.404px;font:normal 400 18.9px 'Liberation Mono', monospace;line-height:21.404px;color:#2b7b98;white-space:pre;-webkit-text-stroke:0.3px currentColor;transform:scaleY(1.06);transform-origin:0 74%">1</div>
<div style="position:absolute;left:583.2px;top:134.231px;line-height:21.404px;font:normal 400 18.9px 'Liberation Mono', monospace;line-height:21.404px;color:#000000;white-space:pre;-webkit-text-stroke:0.3px currentColor;transform:scaleY(1.06);transform-origin:0 74%"><span style="color:#6200ea">import</span><span style="color:#000000"> </span><span style="color:#6200ea">{</span><span style="color:#000000"> NgModule </span><span style="color:#6200ea">}</span><span style="color:#000000"> </span><span style="color:#6200ea">from</span><span style="color:#000000"> </span><span style="color:#a90d0d">'@angular/core'</span><span style="color:#000000">;</span></div>
<div style="position:absolute;left:529.26px;top:162.561px;line-height:21.404px;font:normal 400 18.9px 'Liberation Mono', monospace;line-height:21.404px;color:#2b7b98;white-space:pre;-webkit-text-stroke:0.3px currentColor;transform:scaleY(1.06);transform-origin:0 74%">2</div>
<div style="position:absolute;left:583.2px;top:162.561px;line-height:21.404px;font:normal 400 18.9px 'Liberation Mono', monospace;line-height:21.404px;color:#000000;white-space:pre;-webkit-text-stroke:0.3px currentColor;transform:scaleY(1.06);transform-origin:0 74%"><span style="color:#6200ea">import</span><span style="color:#000000"> </span><span style="color:#6200ea">{</span><span style="color:#000000"> BrowserModule </span><span style="color:#6200ea">}</span><span style="color:#000000"> </span><span style="color:#6200ea">from</span><span style="color:#000000"> </span><span style="color:#a90d0d">'@angular/platform-browser'</span><span style="color:#000000">;</span></div>
<div style="position:absolute;left:529.26px;top:190.891px;line-height:21.404px;font:normal 400 18.9px 'Liberation Mono', monospace;line-height:21.404px;color:#2b7b98;white-space:pre;-webkit-text-stroke:0.3px currentColor;transform:scaleY(1.06);transform-origin:0 74%">3</div>
<div style="position:absolute;left:529.26px;top:219.221px;line-height:21.404px;font:normal 400 18.9px 'Liberation Mono', monospace;line-height:21.404px;color:#2b7b98;white-space:pre;-webkit-text-stroke:0.3px currentColor;transform:scaleY(1.06);transform-origin:0 74%">4</div>
<div style="position:absolute;left:583.2px;top:219.221px;line-height:21.404px;font:normal 400 18.9px 'Liberation Mono', monospace;line-height:21.404px;color:#000000;white-space:pre;-webkit-text-stroke:0.3px currentColor;transform:scaleY(1.06);transform-origin:0 74%"><span style="color:#6200ea">import</span><span style="color:#000000"> </span><span style="color:#6200ea">{</span><span style="color:#000000"> AppRoutingModule </span><span style="color:#6200ea">}</span><span style="color:#000000"> </span><span style="color:#6200ea">from</span><span style="color:#000000"> </span><span style="color:#a90d0d">'./app-routing.module'</span><span style="color:#000000">;</span></div>
<div style="position:absolute;left:529.26px;top:247.551px;line-height:21.404px;font:normal 400 18.9px 'Liberation Mono', monospace;line-height:21.404px;color:#2b7b98;white-space:pre;-webkit-text-stroke:0.3px currentColor;transform:scaleY(1.06);transform-origin:0 74%">5</div>
<div style="position:absolute;left:583.2px;top:247.551px;line-height:21.404px;font:normal 400 18.9px 'Liberation Mono', monospace;line-height:21.404px;color:#000000;white-space:pre;-webkit-text-stroke:0.3px currentColor;transform:scaleY(1.06);transform-origin:0 74%"><span style="color:#6200ea">import</span><span style="color:#000000"> </span><span style="color:#6200ea">{</span><span style="color:#000000"> AppComponent </span><span style="color:#6200ea">}</span><span style="color:#000000"> </span><span style="color:#6200ea">from</span><span style="color:#000000"> </span><span style="color:#a90d0d">'./app.component'</span><span style="color:#000000">;</span></div>
<div style="position:absolute;left:529.26px;top:275.881px;line-height:21.404px;font:normal 400 18.9px 'Liberation Mono', monospace;line-height:21.404px;color:#2b7b98;white-space:pre;-webkit-text-stroke:0.3px currentColor;transform:scaleY(1.06);transform-origin:0 74%">6</div>
<div style="position:absolute;left:583.2px;top:275.881px;line-height:21.404px;font:normal 400 18.9px 'Liberation Mono', monospace;line-height:21.404px;color:#000000;white-space:pre;-webkit-text-stroke:0.3px currentColor;transform:scaleY(1.06);transform-origin:0 74%"><span style="color:#6200ea">import</span><span style="color:#000000"> </span><span style="color:#6200ea">{</span><span style="color:#000000"> BounceComponent </span><span style="color:#6200ea">}</span><span style="color:#000000"> </span><span style="color:#6200ea">from</span><span style="color:#000000"> </span><span style="color:#a90d0d">'./bounce/bounce.component'</span><span style="color:#000000">;</span></div>
<div style="position:absolute;left:529.26px;top:304.211px;line-height:21.404px;font:normal 400 18.9px 'Liberation Mono', monospace;line-height:21.404px;color:#2b7b98;white-space:pre;-webkit-text-stroke:0.3px currentColor;transform:scaleY(1.06);transform-origin:0 74%">7</div>
<div style="position:absolute;left:529.26px;top:332.541px;line-height:21.404px;font:normal 400 18.9px 'Liberation Mono', monospace;line-height:21.404px;color:#2b7b98;white-space:pre;-webkit-text-stroke:0.3px currentColor;transform:scaleY(1.06);transform-origin:0 74%">8</div>
<div style="position:absolute;left:583.2px;top:332.541px;line-height:21.404px;font:normal 400 18.9px 'Liberation Mono', monospace;line-height:21.404px;color:#000000;white-space:pre;-webkit-text-stroke:0.3px currentColor;transform:scaleY(1.06);transform-origin:0 74%"><span style="color:#000000">@NgModule</span><span style="color:#6200ea">(</span><span style="color:#17a017">{</span></div>
<div style="position:absolute;left:529.26px;top:360.871px;line-height:21.404px;font:normal 400 18.9px 'Liberation Mono', monospace;line-height:21.404px;color:#2b7b98;white-space:pre;-webkit-text-stroke:0.3px currentColor;transform:scaleY(1.06);transform-origin:0 74%">9</div>
<div style="position:absolute;left:583.2px;top:360.871px;line-height:21.404px;font:normal 400 18.9px 'Liberation Mono', monospace;line-height:21.404px;color:#000000;white-space:pre;-webkit-text-stroke:0.3px currentColor;transform:scaleY(1.06);transform-origin:0 74%"><span style="color:#000000">  declarations: </span><span style="color:#8a5a1a">[</span></div>
<div style="position:absolute;left:517.9200000000001px;top:389.201px;line-height:21.404px;font:normal 400 18.9px 'Liberation Mono', monospace;line-height:21.404px;color:#2b7b98;white-space:pre;-webkit-text-stroke:0.3px currentColor;transform:scaleY(1.06);transform-origin:0 74%">10</div>
<div style="position:absolute;left:583.2px;top:389.201px;line-height:21.404px;font:normal 400 18.9px 'Liberation Mono', monospace;line-height:21.404px;color:#000000;white-space:pre;-webkit-text-stroke:0.3px currentColor;transform:scaleY(1.06);transform-origin:0 74%"><span style="color:#000000">    AppComponent,</span></div>
<div style="position:absolute;left:517.9200000000001px;top:417.531px;line-height:21.404px;font:normal 400 18.9px 'Liberation Mono', monospace;line-height:21.404px;color:#0b216f;white-space:pre;-webkit-text-stroke:0.3px currentColor;transform:scaleY(1.06);transform-origin:0 74%">11</div>
<div style="position:absolute;left:583.2px;top:417.531px;line-height:21.404px;font:normal 400 18.9px 'Liberation Mono', monospace;line-height:21.404px;color:#000000;white-space:pre;-webkit-text-stroke:0.3px currentColor;transform:scaleY(1.06);transform-origin:0 74%"><span style="color:#000000">    BounceComponent</span></div>
<div style="position:absolute;left:517.9200000000001px;top:445.861px;line-height:21.404px;font:normal 400 18.9px 'Liberation Mono', monospace;line-height:21.404px;color:#2b7b98;white-space:pre;-webkit-text-stroke:0.3px currentColor;transform:scaleY(1.06);transform-origin:0 74%">12</div>
<div style="position:absolute;left:583.2px;top:445.861px;line-height:21.404px;font:normal 400 18.9px 'Liberation Mono', monospace;line-height:21.404px;color:#000000;white-space:pre;-webkit-text-stroke:0.3px currentColor;transform:scaleY(1.06);transform-origin:0 74%"><span style="color:#000000">  </span><span style="color:#8a5a1a">]</span><span style="color:#000000">,</span></div>
<div style="position:absolute;left:517.9200000000001px;top:474.191px;line-height:21.404px;font:normal 400 18.9px 'Liberation Mono', monospace;line-height:21.404px;color:#2b7b98;white-space:pre;-webkit-text-stroke:0.3px currentColor;transform:scaleY(1.06);transform-origin:0 74%">13</div>
<div style="position:absolute;left:583.2px;top:474.191px;line-height:21.404px;font:normal 400 18.9px 'Liberation Mono', monospace;line-height:21.404px;color:#000000;white-space:pre;-webkit-text-stroke:0.3px currentColor;transform:scaleY(1.06);transform-origin:0 74%"><span style="color:#000000">  imports: </span><span style="color:#8a5a1a">[</span></div>
<div style="position:absolute;left:517.9200000000001px;top:502.521px;line-height:21.404px;font:normal 400 18.9px 'Liberation Mono', monospace;line-height:21.404px;color:#2b7b98;white-space:pre;-webkit-text-stroke:0.3px currentColor;transform:scaleY(1.06);transform-origin:0 74%">14</div>
<div style="position:absolute;left:583.2px;top:502.521px;line-height:21.404px;font:normal 400 18.9px 'Liberation Mono', monospace;line-height:21.404px;color:#000000;white-space:pre;-webkit-text-stroke:0.3px currentColor;transform:scaleY(1.06);transform-origin:0 74%"><span style="color:#000000">    BrowserModule,</span></div>
<div style="position:absolute;left:517.9200000000001px;top:530.851px;line-height:21.404px;font:normal 400 18.9px 'Liberation Mono', monospace;line-height:21.404px;color:#2b7b98;white-space:pre;-webkit-text-stroke:0.3px currentColor;transform:scaleY(1.06);transform-origin:0 74%">15</div>
<div style="position:absolute;left:583.2px;top:530.851px;line-height:21.404px;font:normal 400 18.9px 'Liberation Mono', monospace;line-height:21.404px;color:#000000;white-space:pre;-webkit-text-stroke:0.3px currentColor;transform:scaleY(1.06);transform-origin:0 74%"><span style="color:#000000">    AppRoutingModule</span></div>
<div style="position:absolute;left:517.9200000000001px;top:559.181px;line-height:21.404px;font:normal 400 18.9px 'Liberation Mono', monospace;line-height:21.404px;color:#2b7b98;white-space:pre;-webkit-text-stroke:0.3px currentColor;transform:scaleY(1.06);transform-origin:0 74%">16</div>
<div style="position:absolute;left:583.2px;top:559.181px;line-height:21.404px;font:normal 400 18.9px 'Liberation Mono', monospace;line-height:21.404px;color:#000000;white-space:pre;-webkit-text-stroke:0.3px currentColor;transform:scaleY(1.06);transform-origin:0 74%"><span style="color:#000000">  </span><span style="color:#8a5a1a">]</span><span style="color:#000000">,</span></div>
<div style="position:absolute;left:517.9200000000001px;top:587.511px;line-height:21.404px;font:normal 400 18.9px 'Liberation Mono', monospace;line-height:21.404px;color:#2b7b98;white-space:pre;-webkit-text-stroke:0.3px currentColor;transform:scaleY(1.06);transform-origin:0 74%">17</div>
<div style="position:absolute;left:583.2px;top:587.511px;line-height:21.404px;font:normal 400 18.9px 'Liberation Mono', monospace;line-height:21.404px;color:#000000;white-space:pre;-webkit-text-stroke:0.3px currentColor;transform:scaleY(1.06);transform-origin:0 74%"><span style="color:#000000">  providers: </span><span style="color:#8a5a1a">[]</span><span style="color:#000000">,</span></div>
<div style="position:absolute;left:517.9200000000001px;top:615.841px;line-height:21.404px;font:normal 400 18.9px 'Liberation Mono', monospace;line-height:21.404px;color:#2b7b98;white-space:pre;-webkit-text-stroke:0.3px currentColor;transform:scaleY(1.06);transform-origin:0 74%">18</div>
<div style="position:absolute;left:583.2px;top:615.841px;line-height:21.404px;font:normal 400 18.9px 'Liberation Mono', monospace;line-height:21.404px;color:#000000;white-space:pre;-webkit-text-stroke:0.3px currentColor;transform:scaleY(1.06);transform-origin:0 74%"><span style="color:#000000">  bootstrap: </span><span style="color:#8a5a1a">[</span><span style="color:#000000">AppComponent</span><span style="color:#8a5a1a">]</span></div>
<div style="position:absolute;left:517.9200000000001px;top:644.171px;line-height:21.404px;font:normal 400 18.9px 'Liberation Mono', monospace;line-height:21.404px;color:#2b7b98;white-space:pre;-webkit-text-stroke:0.3px currentColor;transform:scaleY(1.06);transform-origin:0 74%">19</div>
<div style="position:absolute;left:583.2px;top:644.171px;line-height:21.404px;font:normal 400 18.9px 'Liberation Mono', monospace;line-height:21.404px;color:#000000;white-space:pre;-webkit-text-stroke:0.3px currentColor;transform:scaleY(1.06);transform-origin:0 74%"><span style="color:#17a017">}</span><span style="color:#6200ea">)</span></div>
<div style="position:absolute;left:517.9200000000001px;top:672.501px;line-height:21.404px;font:normal 400 18.9px 'Liberation Mono', monospace;line-height:21.404px;color:#2b7b98;white-space:pre;-webkit-text-stroke:0.3px currentColor;transform:scaleY(1.06);transform-origin:0 74%">20</div>
<div style="position:absolute;left:583.2px;top:672.501px;line-height:21.404px;font:normal 400 18.9px 'Liberation Mono', monospace;line-height:21.404px;color:#000000;white-space:pre;-webkit-text-stroke:0.3px currentColor;transform:scaleY(1.06);transform-origin:0 74%"><span style="color:#6200ea">export</span><span style="color:#000000"> </span><span style="color:#6200ea">class</span><span style="color:#000000"> AppModule </span><span style="color:#6200ea">{</span><span style="color:#000000"> </span><span style="color:#6200ea">}</span></div>
<div style="position:absolute;left:1658px;top:144.55px;width:156px;height:3.15px;background:#e8e8e8;"></div>
<svg style="position:absolute;left:0;top:0" width="1836" height="1045"><rect x="1659.70" y="129.50" width="1.21" height="1.7" fill="#6200ea" fill-opacity="0.6"/><rect x="1661.26" y="129.50" width="1.21" height="1.7" fill="#6200ea" fill-opacity="0.6"/><rect x="1662.82" y="129.50" width="1.21" height="1.7" fill="#6200ea" fill-opacity="0.6"/><rect x="1664.38" y="129.50" width="1.21" height="1.7" fill="#6200ea" fill-opacity="0.6"/><rect x="1665.94" y="129.50" width="1.21" height="1.7" fill="#6200ea" fill-opacity="0.6"/><rect x="1667.50" y="129.50" width="1.21" height="1.7" fill="#6200ea" fill-opacity="0.6"/><rect x="1670.62" y="129.50" width="1.21" height="1.7" fill="#6200ea" fill-opacity="0.6"/><rect x="1673.74" y="129.50" width="1.21" height="1.7" fill="#000000" fill-opacity="0.45"/><rect x="1675.30" y="129.50" width="1.21" height="1.7" fill="#000000" fill-opacity="0.45"/><rect x="1676.86" y="129.50" width="1.21" height="1.7" fill="#000000" fill-opacity="0.45"/><rect x="1678.42" y="129.50" width="1.21" height="1.7" fill="#000000" fill-opacity="0.45"/><rect x="1679.98" y="129.50" width="1.21" height="1.7" fill="#000000" fill-opacity="0.45"/><rect x="1681.54" y="129.50" width="1.21" height="1.7" fill="#000000" fill-opacity="0.45"/><rect x="1683.10" y="129.50" width="1.21" height="1.7" fill="#000000" fill-opacity="0.45"/><rect x="1684.66" y="129.50" width="1.21" height="1.7" fill="#000000" fill-opacity="0.45"/><rect x="1687.78" y="129.50" width="1.21" height="1.7" fill="#6200ea" fill-opacity="0.6"/><rect x="1690.90" y="129.50" width="1.21" height="1.7" fill="#6200ea" fill-opacity="0.6"/><rect x="1692.46" y="129.50" width="1.21" height="1.7" fill="#6200ea" fill-opacity="0.6"/><rect x="1694.02" y="129.50" width="1.21" height="1.7" fill="#6200ea" fill-opacity="0.6"/><rect x="1695.58" y="129.50" width="1.21" height="1.7" fill="#6200ea" fill-opacity="0.6"/><rect x="1698.70" y="129.50" width="1.21" height="1.7" fill="#a90d0d" fill-opacity="0.6"/><rect x="1700.26" y="129.50" width="1.21" height="1.7" fill="#a90d0d" fill-opacity="0.6"/><rect x="1701.82" y="129.50" width="1.21" height="1.7" fill="#a90d0d" fill-opacity="0.6"/><rect x="1703.38" y="129.50" width="1.21" height="1.7" fill="#a90d0d" fill-opacity="0.6"/><rect x="1704.94" y="129.50" width="1.21" height="1.7" fill="#a90d0d" fill-opacity="0.6"/><rect x="1706.50" y="129.50" width="1.21" height="1.7" fill="#a90d0d" fill-opacity="0.6"/><rect x="1708.06" y="129.50" width="1.21" height="1.7" fill="#a90d0d" fill-opacity="0.6"/><rect x="1709.62" y="129.50" width="1.21" height="1.7" fill="#a90d0d" fill-opacity="0.6"/><rect x="1711.18" y="129.50" width="1.21" height="1.7" fill="#a90d0d" fill-opacity="0.6"/><rect x="1712.74" y="129.50" width="1.21" height="1.7" fill="#a90d0d" fill-opacity="0.6"/><rect x="1714.30" y="129.50" width="1.21" height="1.7" fill="#a90d0d" fill-opacity="0.6"/><rect x="1715.86" y="129.50" width="1.21" height="1.7" fill="#a90d0d" fill-opacity="0.6"/><rect x="1717.42" y="129.50" width="1.21" height="1.7" fill="#a90d0d" fill-opacity="0.6"/><rect x="1718.98" y="129.50" width="1.21" height="1.7" fill="#a90d0d" fill-opacity="0.6"/><rect x="1720.54" y="129.50" width="1.21" height="1.7" fill="#a90d0d" fill-opacity="0.6"/><rect x="1722.10" y="129.50" width="1.21" height="1.7" fill="#000000" fill-opacity="0.45"/><rect x="1659.70" y="132.65" width="1.21" height="1.7" fill="#6200ea" fill-opacity="0.6"/><rect x="1661.26" y="132.65" width="1.21" height="1.7" fill="#6200ea" fill-opacity="0.6"/><rect x="1662.82" y="132.65" width="1.21" height="1.7" fill="#6200ea" fill-opacity="0.6"/><rect x="1664.38" y="132.65" width="1.21" height="1.7" fill="#6200ea" fill-opacity="0.6"/><rect x="1665.94" y="132.65" width="1.21" height="1.7" fill="#6200ea" fill-opacity="0.6"/><rect x="1667.50" y="132.65" width="1.21" height="1.7" fill="#6200ea" fill-opacity="0.6"/><rect x="1670.62" y="132.65" width="1.21" height="1.7" fill="#6200ea" fill-opacity="0.6"/><rect x="1673.74" y="132.65" width="1.21" height="1.7" fill="#000000" fill-opacity="0.45"/><rect x="1675.30" y="132.65" width="1.21" height="1.7" fill="#000000" fill-opacity="0.45"/><rect x="1676.86" y="132.65" width="1.21" height="1.7" fill="#000000" fill-opacity="0.45"/><rect x="1678.42" y="132.65" width="1.21" height="1.7" fill="#000000" fill-opacity="0.45"/><rect x="1679.98" y="132.65" width="1.21" height="1.7" fill="#000000" fill-opacity="0.45"/><rect x="1681.54" y="132.65" width="1.21" height="1.7" fill="#000000" fill-opacity="0.45"/><rect x="1683.10" y="132.65" width="1.21" height="1.7" fill="#000000" fill-opacity="0.45"/><rect x="1684.66" y="132.65" width="1.21" height="1.7" fill="#000000" fill-opacity="0.45"/><rect x="1686.22" y="132.65" width="1.21" height="1.7" fill="#000000" fill-opacity="0.45"/><rect x="1687.78" y="132.65" width="1.21" height="1.7" fill="#000000" fill-opacity="0.45"/><rect x="1689.34" y="132.65" width="1.21" height="1.7" fill="#000000" fill-opacity="0.45"/><rect x="1690.90" y="132.65" width="1.21" height="1.7" fill="#000000" fill-opacity="0.45"/><rect x="1692.46" y="132.65" width="1.21" height="1.7" fill="#000000" fill-opacity="0.45"/><rect x="1695.58" y="132.65" width="1.21" height="1.7" fill="#6200ea" fill-opacity="0.6"/><rect x="1698.70" y="132.65" width="1.21" height="1.7" fill="#6200ea" fill-opacity="0.6"/><rect x="1700.26" y="132.65" width="1.21" height="1.7" fill="#6200ea" fill-opacity="0.6"/><rect x="1701.82" y="132.65" width="1.21" height="1.7" fill="#6200ea" fill-opacity="0.6"/><rect x="1703.38" y="132.65" width="1.21" height="1.7" fill="#6200ea" fill-opacity="0.6"/><rect x="1706.50" y="132.65" width="1.21" height="1.7" fill="#a90d0d" fill-opacity="0.6"/><rect x="1708.06" y="132.65" width="1.21" height="1.7" fill="#a90d0d" fill-opacity="0.6"/><rect x="1709.62" y="132.65" width="1.21" height="1.7" fill="#a90d0d" fill-opacity="0.6"/><rect x="1711.18" y="132.65" width="1.21" height="1.7" fill="#a90d0d" fill-opacity="0.6"/><rect x="1712.74" y="132.65" width="1.21" height="1.7" fill="#a90d0d" fill-opacity="0.6"/><rect x="1714.30" y="132.65" width="1.21" height="1.7" fill="#a90d0d" fill-opacity="0.6"/><rect x="1715.86" y="132.65" width="1.21" height="1.7" fill="#a90d0d" fill-opacity="0.6"/><rect x="1717.42" y="132.65" width="1.21" height="1.7" fill="#a90d0d" fill-opacity="0.6"/><rect x="1718.98" y="132.65" width="1.21" height="1.7" fill="#a90d0d" fill-opacity="0.6"/><rect x="1720.54" y="132.65" width="1.21" height="1.7" fill="#a90d0d" fill-opacity="0.6"/><rect x="1722.10" y="132.65" width="1.21" height="1.7" fill="#a90d0d" fill-opacity="0.6"/><rect x="1723.66" y="132.65" width="1.21" height="1.7" fill="#a90d0d" fill-opacity="0.6"/><rect x="1725.22" y="132.65" width="1.21" height="1.7" fill="#a90d0d" fill-opacity="0.6"/><rect x="1726.78" y="132.65" width="1.21" height="1.7" fill="#a90d0d" fill-opacity="0.6"/><rect x="1728.34" y="132.65" width="1.21" height="1.7" fill="#a90d0d" fill-opacity="0.6"/><rect x="1729.90" y="132.65" width="1.21" height="1.7" fill="#a90d0d" fill-opacity="0.6"/><rect x="1731.46" y="132.65" width="1.21" height="1.7" fill="#a90d0d" fill-opacity="0.6"/><rect x="1733.02" y="132.65" width="1.21" height="1.7" fill="#a90d0d" fill-opacity="0.6"/><rect x="1734.58" y="132.65" width="1.21" height="1.7" fill="#a90d0d" fill-opacity="0.6"/><rect x="1736.14" y="132.65" width="1.21" height="1.7" fill="#a90d0d" fill-opacity="0.6"/><rect x="1737.70" y="132.65" width="1.21" height="1.7" fill="#a90d0d" fill-opacity="0.6"/><rect x="1739.26" y="132.65" width="1.21" height="1.7" fill="#a90d0d" fill-opacity="0.6"/><rect x="1740.82" y="132.65" width="1.21" height="1.7" fill="#a90d0d" fill-opacity="0.6"/><rect x="1742.38" y="132.65" width="1.21" height="1.7" fill="#a90d0d" fill-opacity="0.6"/><rect x="1743.94" y="132.65" width="1.21" height="1.7" fill="#a90d0d" fill-opacity="0.6"/><rect x="1745.50" y="132.65" width="1.21" height="1.7" fill="#a90d0d" fill-opacity="0.6"/><rect x="1747.06" y="132.65" width="1.21" height="1.7" fill="#a90d0d" fill-opacity="0.6"/><rect x="1748.62" y="132.65" width="1.21" height="1.7" fill="#000000" fill-opacity="0.45"/><rect x="1659.70" y="138.95" width="1.21" height="1.7" fill="#6200ea" fill-opacity="0.6"/><rect x="1661.26" y="138.95" width="1.21" height="1.7" fill="#6200ea" fill-opacity="0.6"/><rect x="1662.82" y="138.95" width="1.21" height="1.7" fill="#6200ea" fill-opacity="0.6"/><rect x="1664.38" y="138.95" width="1.21" height="1.7" fill="#6200ea" fill-opacity="0.6"/><rect x="1665.94" y="138.95" width="1.21" height="1.7" fill="#6200ea" fill-opacity="0.6"/><rect x="1667.50" y="138.95" width="1.21" height="1.7" fill="#6200ea" fill-opacity="0.6"/><rect x="1670.62" y="138.95" width="1.21" height="1.7" fill="#6200ea" fill-opacity="0.6"/><rect x="1673.74" y="138.95" width="1.21" height="1.7" fill="#000000" fill-opacity="0.45"/><rect x="1675.30" y="138.95" width="1.21" height="1.7" fill="#000000" fill-opacity="0.45"/><rect x="1676.86" y="138.95" width="1.21" height="1.7" fill="#000000" fill-opacity="0.45"/><rect x="1678.42" y="138.95" width="1.21" height="1.7" fill="#000000" fill-opacity="0.45"/><rect x="1679.98" y="138.95" width="1.21" height="1.7" fill="#000000" fill-opacity="0.45"/><rect x="1681.54" y="138.95" width="1.21" height="1.7" fill="#000000" fill-opacity="0.45"/><rect x="1683.10" y="138.95" width="1.21" height="1.7" fill="#000000" fill-opacity="0.45"/><rect x="1684.66" y="138.95" width="1.21" height="1.7" fill="#000000" fill-opacity="0.45"/><rect x="1686.22" y="138.95" width="1.21" height="1.7" fill="#000000" fill-opacity="0.45"/><rect x="1687.78" y="138.95" width="1.21" height="1.7" fill="#000000" fill-opacity="0.45"/><rect x="1689.34" y="138.95" width="1.21" height="1.7" fill="#000000" fill-opacity="0.45"/><rect x="1690.90" y="138.95" width="1.21" height="1.7" fill="#000000" fill-opacity="0.45"/><rect x="1692.46" y="138.95" width="1.21" height="1.7" fill="#000000" fill-opacity="0.45"/><rect x="1694.02" y="138.95" width="1.21" height="1.7" fill="#000000" fill-opacity="0.45"/><rect x="1695.58" y="138.95" width="1.21" height="1.7" fill="#000000" fill-opacity="0.45"/><rect x="1697.14" y="138.95" width="1.21" height="1.7" fill="#000000" fill-opacity="0.45"/><rect x="1700.26" y="138.95" width="1.21" height="1.7" fill="#6200ea" fill-opacity="0.6"/><rect x="1703.38" y="138.95" width="1.21" height="1.7" fill="#6200ea" fill-opacity="0.6"/><rect x="1704.94" y="138.95" width="1.21" height="1.7" fill="#6200ea" fill-opacity="0.6"/><rect x="1706.50" y="138.95" width="1.21" height="1.7" fill="#6200ea" fill-opacity="0.6"/><rect x="1708.06" y="138.95" width="1.21" height="1.7" fill="#6200ea" fill-opacity="0.6"/><rect x="1711.18" y="138.95" width="1.21" height="1.7" fill="#a90d0d" fill-opacity="0.6"/><rect x="1712.74" y="138.95" width="1.21" height="1.7" fill="#a90d0d" fill-opacity="0.6"/><rect x="1714.30" y="138.95" width="1.21" height="1.7" fill="#a90d0d" fill-opacity="0.6"/><rect x="1715.86" y="138.95" width="1.21" height="1.7" fill="#a90d0d" fill-opacity="0.6"/><rect x="1717.42" y="138.95" width="1.21" height="1.7" fill="#a90d0d" fill-opacity="0.6"/><rect x="1718.98" y="138.95" width="1.21" height="1.7" fill="#a90d0d" fill-opacity="0.6"/><rect x="1720.54" y="138.95" width="1.21" height="1.7" fill="#a90d0d" fill-opacity="0.6"/><rect x="1722.10" y="138.95" width="1.21" height="1.7" fill="#a90d0d" fill-opacity="0.6"/><rect x="1723.66" y="138.95" width="1.21" height="1.7" fill="#a90d0d" fill-opacity="0.6"/><rect x="1725.22" y="138.95" width="1.21" height="1.7" fill="#a90d0d" fill-opacity="0.6"/><rect x="1726.78" y="138.95" width="1.21" height="1.7" fill="#a90d0d" fill-opacity="0.6"/><rect x="1728.34" y="138.95" width="1.21" height="1.7" fill="#a90d0d" fill-opacity="0.6"/><rect x="1729.90" y="138.95" width="1.21" height="1.7" fill="#a90d0d" fill-opacity="0.6"/><rect x="1731.46" y="138.95" width="1.21" height="1.7" fill="#a90d0d" fill-opacity="0.6"/><rect x="1733.02" y="138.95" width="1.21" height="1.7" fill="#a90d0d" fill-opacity="0.6"/><rect x="1734.58" y="138.95" width="1.21" height="1.7" fill="#a90d0d" fill-opacity="0.6"/><rect x="1736.14" y="138.95" width="1.21" height="1.7" fill="#a90d0d" fill-opacity="0.6"/><rect x="1737.70" y="138.95" width="1.21" height="1.7" fill="#a90d0d" fill-opacity="0.6"/><rect x="1739.26" y="138.95" width="1.21" height="1.7" fill="#a90d0d" fill-opacity="0.6"/><rect x="1740.82" y="138.95" width="1.21" height="1.7" fill="#a90d0d" fill-opacity="0.6"/><rect x="1742.38" y="138.95" width="1.21" height="1.7" fill="#a90d0d" fill-opacity="0.6"/><rect x="1743.94" y="138.95" width="1.21" height="1.7" fill="#a90d0d" fill-opacity="0.6"/><rect x="1745.50" y="138.95" width="1.21" height="1.7" fill="#000000" fill-opacity="0.45"/><rect x="1659.70" y="142.10" width="1.21" height="1.7" fill="#6200ea" fill-opacity="0.6"/><rect x="1661.26" y="142.10" width="1.21" height="1.7" fill="#6200ea" fill-opacity="0.6"/><rect x="1662.82" y="142.10" width="1.21" height="1.7" fill="#6200ea" fill-opacity="0.6"/><rect x="1664.38" y="142.10" width="1.21" height="1.7" fill="#6200ea" fill-opacity="0.6"/><rect x="1665.94" y="142.10" width="1.21" height="1.7" fill="#6200ea" fill-opacity="0.6"/><rect x="1667.50" y="142.10" width="1.21" height="1.7" fill="#6200ea" fill-opacity="0.6"/><rect x="1670.62" y="142.10" width="1.21" height="1.7" fill="#6200ea" fill-opacity="0.6"/><rect x="1673.74" y="142.10" width="1.21" height="1.7" fill="#000000" fill-opacity="0.45"/><rect x="1675.30" y="142.10" width="1.21" height="1.7" fill="#000000" fill-opacity="0.45"/><rect x="1676.86" y="142.10" width="1.21" height="1.7" fill="#000000" fill-opacity="0.45"/><rect x="1678.42" y="142.10" width="1.21" height="1.7" fill="#000000" fill-opacity="0.45"/><rect x="1679.98" y="142.10" width="1.21" height="1.7" fill="#000000" fill-opacity="0.45"/><rect x="1681.54" y="142.10" width="1.21" height="1.7" fill="#000000" fill-opacity="0.45"/><rect x="1683.10" y="142.10" width="1.21" height="1.7" fill="#000000" fill-opacity="0.45"/><rect x="1684.66" y="142.10" width="1.21" height="1.7" fill="#000000" fill-opacity="0.45"/><rect x="1686.22" y="142.10" width="1.21" height="1.7" fill="#000000" fill-opacity="0.45"/><rect x="1687.78" y="142.10" width="1.21" height="1.7" fill="#000000" fill-opacity="0.45"/><rect x="1689.34" y="142.10" width="1.21" height="1.7" fill="#000000" fill-opacity="0.45"/><rect x="1690.90" y="142.10" width="1.21" height="1.7" fill="#000000" fill-opacity="0.45"/><rect x="1694.02" y="142.10" width="1.21" height="1.7" fill="#6200ea" fill-opacity="0.6"/><rect x="1697.14" y="142.10" width="1.21" height="1.7" fill="#6200ea" fill-opacity="0.6"/><rect x="1698.70" y="142.10" width="1.21" height="1.7" fill="#6200ea" fill-opacity="0.6"/><rect x="1700.26" y="142.10" width="1.21" height="1.7" fill="#6200ea" fill-opacity="0.6"/><rect x="1701.82" y="142.10" width="1.21" height="1.7" fill="#6200ea" fill-opacity="0.6"/><rect x="1704.94" y="142.10" width="1.21" height="1.7" fill="#a90d0d" fill-opacity="0.6"/><rect x="1706.50" y="142.10" width="1.21" height="1.7" fill="#a90d0d" fill-opacity="0.6"/><rect x="1708.06" y="142.10" width="1.21" height="1.7" fill="#a90d0d" fill-opacity="0.6"/><rect x="1709.62" y="142.10" width="1.21" height="1.7" fill="#a90d0d" fill-opacity="0.6"/><rect x="1711.18" y="142.10" width="1.21" height="1.7" fill="#a90d0d" fill-opacity="0.6"/><rect x="1712.74" y="142.10" width="1.21" height="1.7" fill="#a90d0d" fill-opacity="0.6"/><rect x="1714.30" y="142.10" width="1.21" height="1.7" fill="#a90d0d" fill-opacity="0.6"/><rect x="1715.86" y="142.10" width="1.21" height="1.7" fill="#a90d0d" fill-opacity="0.6"/><rect x="1717.42" y="142.10" width="1.21" height="1.7" fill="#a90d0d" fill-opacity="0.6"/><rect x="1718.98" y="142.10" width="1.21" height="1.7" fill="#a90d0d" fill-opacity="0.6"/><rect x="1720.54" y="142.10" width="1.21" height="1.7" fill="#a90d0d" fill-opacity="0.6"/><rect x="1722.10" y="142.10" width="1.21" height="1.7" fill="#a90d0d" fill-opacity="0.6"/><rect x="1723.66" y="142.10" width="1.21" height="1.7" fill="#a90d0d" fill-opacity="0.6"/><rect x="1725.22" y="142.10" width="1.21" height="1.7" fill="#a90d0d" fill-opacity="0.6"/><rect x="1726.78" y="142.10" width="1.21" height="1.7" fill="#a90d0d" fill-opacity="0.6"/><rect x="1728.34" y="142.10" width="1.21" height="1.7" fill="#a90d0d" fill-opacity="0.6"/><rect x="1729.90" y="142.10" width="1.21" height="1.7" fill="#a90d0d" fill-opacity="0.6"/><rect x="1731.46" y="142.10" width="1.21" height="1.7" fill="#000000" fill-opacity="0.45"/><rect x="1659.70" y="145.25" width="1.21" height="1.7" fill="#6200ea" fill-opacity="0.6"/><rect x="1661.26" y="145.25" width="1.21" height="1.7" fill="#6200ea" fill-opacity="0.6"/><rect x="1662.82" y="145.25" width="1.21" height="1.7" fill="#6200ea" fill-opacity="0.6"/><rect x="1664.38" y="145.25" width="1.21" height="1.7" fill="#6200ea" fill-opacity="0.6"/><rect x="1665.94" y="145.25" width="1.21" height="1.7" fill="#6200ea" fill-opacity="0.6"/><rect x="1667.50" y="145.25" width="1.21" height="1.7" fill="#6200ea" fill-opacity="0.6"/><rect x="1670.62" y="145.25" width="1.21" height="1.7" fill="#6200ea" fill-opacity="0.6"/><rect x="1673.74" y="145.25" width="1.21" height="1.7" fill="#b0b0b0" fill-opacity="0.5"/><rect x="1675.30" y="145.25" width="1.21" height="1.7" fill="#b0b0b0" fill-opacity="0.5"/><rect x="1676.86" y="145.25" width="1.21" height="1.7" fill="#b0b0b0" fill-opacity="0.5"/><rect x="1678.42" y="145.25" width="1.21" height="1.7" fill="#b0b0b0" fill-opacity="0.5"/><rect x="1679.98" y="145.25" width="1.21" height="1.7" fill="#b0b0b0" fill-opacity="0.5"/><rect x="1681.54" y="145.25" width="1.21" height="1.7" fill="#b0b0b0" fill-opacity="0.5"/><rect x="1683.10" y="145.25" width="1.21" height="1.7" fill="#b0b0b0" fill-opacity="0.5"/><rect x="1684.66" y="145.25" width="1.21" height="1.7" fill="#b0b0b0" fill-opacity="0.5"/><rect x="1686.22" y="145.25" width="1.21" height="1.7" fill="#b0b0b0" fill-opacity="0.5"/><rect x="1687.78" y="145.25" width="1.21" height="1.7" fill="#b0b0b0" fill-opacity="0.5"/><rect x="1689.34" y="145.25" width="1.21" height="1.7" fill="#b0b0b0" fill-opacity="0.5"/><rect x="1690.90" y="145.25" width="1.21" height="1.7" fill="#b0b0b0" fill-opacity="0.5"/><rect x="1692.46" y="145.25" width="1.21" height="1.7" fill="#b0b0b0" fill-opacity="0.5"/><rect x="1694.02" y="145.25" width="1.21" height="1.7" fill="#b0b0b0" fill-opacity="0.5"/><rect x="1695.58" y="145.25" width="1.21" height="1.7" fill="#b0b0b0" fill-opacity="0.5"/><rect x="1698.70" y="145.25" width="1.21" height="1.7" fill="#6200ea" fill-opacity="0.6"/><rect x="1701.82" y="145.25" width="1.21" height="1.7" fill="#6200ea" fill-opacity="0.6"/><rect x="1703.38" y="145.25" width="1.21" height="1.7" fill="#6200ea" fill-opacity="0.6"/><rect x="1704.94" y="145.25" width="1.21" height="1.7" fill="#6200ea" fill-opacity="0.6"/><rect x="1706.50" y="145.25" width="1.21" height="1.7" fill="#6200ea" fill-opacity="0.6"/><rect x="1709.62" y="145.25" width="1.21" height="1.7" fill="#a90d0d" fill-opacity="0.6"/><rect x="1711.18" y="145.25" width="1.21" height="1.7" fill="#a90d0d" fill-opacity="0.6"/><rect x="1712.74" y="145.25" width="1.21" height="1.7" fill="#a90d0d" fill-opacity="0.6"/><rect x="1714.30" y="145.25" width="1.21" height="1.7" fill="#a90d0d" fill-opacity="0.6"/><rect x="1715.86" y="145.25" width="1.21" height="1.7" fill="#a90d0d" fill-opacity="0.6"/><rect x="1717.42" y="145.25" width="1.21" height="1.7" fill="#a90d0d" fill-opacity="0.6"/><rect x="1718.98" y="145.25" width="1.21" height="1.7" fill="#a90d0d" fill-opacity="0.6"/><rect x="1720.54" y="145.25" width="1.21" height="1.7" fill="#a90d0d" fill-opacity="0.6"/><rect x="1722.10" y="145.25" width="1.21" height="1.7" fill="#a90d0d" fill-opacity="0.6"/><rect x="1723.66" y="145.25" width="1.21" height="1.7" fill="#a90d0d" fill-opacity="0.6"/><rect x="1725.22" y="145.25" width="1.21" height="1.7" fill="#a90d0d" fill-opacity="0.6"/><rect x="1726.78" y="145.25" width="1.21" height="1.7" fill="#a90d0d" fill-opacity="0.6"/><rect x="1728.34" y="145.25" width="1.21" height="1.7" fill="#a90d0d" fill-opacity="0.6"/><rect x="1729.90" y="145.25" width="1.21" height="1.7" fill="#a90d0d" fill-opacity="0.6"/><rect x="1731.46" y="145.25" width="1.21" height="1.7" fill="#a90d0d" fill-opacity="0.6"/><rect x="1733.02" y="145.25" width="1.21" height="1.7" fill="#a90d0d" fill-opacity="0.6"/><rect x="1734.58" y="145.25" width="1.21" height="1.7" fill="#a90d0d" fill-opacity="0.6"/><rect x="1736.14" y="145.25" width="1.21" height="1.7" fill="#a90d0d" fill-opacity="0.6"/><rect x="1737.70" y="145.25" width="1.21" height="1.7" fill="#a90d0d" fill-opacity="0.6"/><rect x="1739.26" y="145.25" width="1.21" height="1.7" fill="#a90d0d" fill-opacity="0.6"/><rect x="1740.82" y="145.25" width="1.21" height="1.7" fill="#a90d0d" fill-opacity="0.6"/><rect x="1742.38" y="145.25" width="1.21" height="1.7" fill="#a90d0d" fill-opacity="0.6"/><rect x="1743.94" y="145.25" width="1.21" height="1.7" fill="#a90d0d" fill-opacity="0.6"/><rect x="1745.50" y="145.25" width="1.21" height="1.7" fill="#a90d0d" fill-opacity="0.6"/><rect x="1747.06" y="145.25" width="1.21" height="1.7" fill="#a90d0d" fill-opacity="0.6"/><rect x="1748.62" y="145.25" width="1.21" height="1.7" fill="#a90d0d" fill-opacity="0.6"/><rect x="1750.18" y="145.25" width="1.21" height="1.7" fill="#a90d0d" fill-opacity="0.6"/><rect x="1751.74" y="145.25" width="1.21" height="1.7" fill="#000000" fill-opacity="0.45"/><rect x="1659.70" y="151.55" width="1.21" height="1.7" fill="#000000" fill-opacity="0.45"/><rect x="1661.26" y="151.55" width="1.21" height="1.7" fill="#000000" fill-opacity="0.45"/><rect x="1662.82" y="151.55" width="1.21" height="1.7" fill="#000000" fill-opacity="0.45"/><rect x="1664.38" y="151.55" width="1.21" height="1.7" fill="#000000" fill-opacity="0.45"/><rect x="1665.94" y="151.55" width="1.21" height="1.7" fill="#000000" fill-opacity="0.45"/><rect x="1667.50" y="151.55" width="1.21" height="1.7" fill="#000000" fill-opacity="0.45"/><rect x="1669.06" y="151.55" width="1.21" height="1.7" fill="#000000" fill-opacity="0.45"/><rect x="1670.62" y="151.55" width="1.21" height="1.7" fill="#000000" fill-opacity="0.45"/><rect x="1672.18" y="151.55" width="1.21" height="1.7" fill="#000000" fill-opacity="0.45"/><rect x="1673.74" y="151.55" width="1.21" height="1.7" fill="#6200ea" fill-opacity="0.6"/><rect x="1675.30" y="151.55" width="1.21" height="1.7" fill="#17a017" fill-opacity="0.6"/><rect x="1662.82" y="154.70" width="1.21" height="1.7" fill="#000000" fill-opacity="0.45"/><rect x="1664.38" y="154.70" width="1.21" height="1.7" fill="#000000" fill-opacity="0.45"/><rect x="1665.94" y="154.70" width="1.21" height="1.7" fill="#000000" fill-opacity="0.45"/><rect x="1667.50" y="154.70" width="1.21" height="1.7" fill="#000000" fill-opacity="0.45"/><rect x="1669.06" y="154.70" width="1.21" height="1.7" fill="#000000" fill-opacity="0.45"/><rect x="1670.62" y="154.70" width="1.21" height="1.7" fill="#000000" fill-opacity="0.45"/><rect x="1672.18" y="154.70" width="1.21" height="1.7" fill="#000000" fill-opacity="0.45"/><rect x="1673.74" y="154.70" width="1.21" height="1.7" fill="#000000" fill-opacity="0.45"/><rect x="1675.30" y="154.70" width="1.21" height="1.7" fill="#000000" fill-opacity="0.45"/><rect x="1676.86" y="154.70" width="1.21" height="1.7" fill="#000000" fill-opacity="0.45"/><rect x="1678.42" y="154.70" width="1.21" height="1.7" fill="#000000" fill-opacity="0.45"/><rect x="1679.98" y="154.70" width="1.21" height="1.7" fill="#000000" fill-opacity="0.45"/><rect x="1681.54" y="154.70" width="1.21" height="1.7" fill="#000000" fill-opacity="0.45"/><rect x="1684.66" y="154.70" width="1.21" height="1.7" fill="#8a5a1a" fill-opacity="0.6"/><rect x="1665.94" y="157.85" width="1.21" height="1.7" fill="#000000" fill-opacity="0.45"/><rect x="1667.50" y="157.85" width="1.21" height="1.7" fill="#000000" fill-opacity="0.45"/><rect x="1669.06" y="157.85" width="1.21" height="1.7" fill="#000000" fill-opacity="0.45"/><rect x="1670.62" y="157.85" width="1.21" height="1.7" fill="#000000" fill-opacity="0.45"/><rect x="1672.18" y="157.85" width="1.21" height="1.7" fill="#000000" fill-opacity="0.45"/><rect x="1673.74" y="157.85" width="1.21" height="1.7" fill="#000000" fill-opacity="0.45"/><rect x="1675.30" y="157.85" width="1.21" height="1.7" fill="#000000" fill-opacity="0.45"/><rect x="1676.86" y="157.85" width="1.21" height="1.7" fill="#000000" fill-opacity="0.45"/><rect x="1678.42" y="157.85" width="1.21" height="1.7" fill="#000000" fill-opacity="0.45"/><rect x="1679.98" y="157.85" width="1.21" height="1.7" fill="#000000" fill-opacity="0.45"/><rect x="1681.54" y="157.85" width="1.21" height="1.7" fill="#000000" fill-opacity="0.45"/><rect x="1683.10" y="157.85" width="1.21" height="1.7" fill="#000000" fill-opacity="0.45"/><rect x="1684.66" y="157.85" width="1.21" height="1.7" fill="#000000" fill-opacity="0.45"/><rect x="1665.94" y="161.00" width="1.21" height="1.7" fill="#000000" fill-opacity="0.45"/><rect x="1667.50" y="161.00" width="1.21" height="1.7" fill="#000000" fill-opacity="0.45"/><rect x="1669.06" y="161.00" width="1.21" height="1.7" fill="#000000" fill-opacity="0.45"/><rect x="1670.62" y="161.00" width="1.21" height="1.7" fill="#000000" fill-opacity="0.45"/><rect x="1672.18" y="161.00" width="1.21" height="1.7" fill="#000000" fill-opacity="0.45"/><rect x="1673.74" y="161.00" width="1.21" height="1.7" fill="#000000" fill-opacity="0.45"/><rect x="1675.30" y="161.00" width="1.21" height="1.7" fill="#000000" fill-opacity="0.45"/><rect x="1676.86" y="161.00" width="1.21" height="1.7" fill="#000000" fill-opacity="0.45"/><rect x="1678.42" y="161.00" width="1.21" height="1.7" fill="#000000" fill-opacity="0.45"/><rect x="1679.98" y="161.00" width="1.21" height="1.7" fill="#000000" fill-opacity="0.45"/><rect x="1681.54" y="161.00" width="1.21" height="1.7" fill="#000000" fill-opacity="0.45"/><rect x="1683.10" y="161.00" width="1.21" height="1.7" fill="#000000" fill-opacity="0.45"/><rect x="1684.66" y="161.00" width="1.21" height="1.7" fill="#000000" fill-opacity="0.45"/><rect x="1686.22" y="161.00" width="1.21" height="1.7" fill="#000000" fill-opacity="0.45"/><rect x="1687.78" y="161.00" width="1.21" height="1.7" fill="#000000" fill-opacity="0.45"/><rect x="1662.82" y="164.15" width="1.21" height="1.7" fill="#8a5a1a" fill-opacity="0.6"/><rect x="1664.38" y="164.15" width="1.21" height="1.7" fill="#000000" fill-opacity="0.45"/><rect x="1662.82" y="167.30" width="1.21" height="1.7" fill="#000000" fill-opacity="0.45"/><rect x="1664.38" y="167.30" width="1.21" height="1.7" fill="#000000" fill-opacity="0.45"/><rect x="1665.94" y="167.30" width="1.21" height="1.7" fill="#000000" fill-opacity="0.45"/><rect x="1667.50" y="167.30" width="1.21" height="1.7" fill="#000000" fill-opacity="0.45"/><rect x="1669.06" y="167.30" width="1.21" height="1.7" fill="#000000" fill-opacity="0.45"/><rect x="1670.62" y="167.30" width="1.21" height="1.7" fill="#000000" fill-opacity="0.45"/><rect x="1672.18" y="167.30" width="1.21" height="1.7" fill="#000000" fill-opacity="0.45"/><rect x="1673.74" y="167.30" width="1.21" height="1.7" fill="#000000" fill-opacity="0.45"/><rect x="1676.86" y="167.30" width="1.21" height="1.7" fill="#8a5a1a" fill-opacity="0.6"/><rect x="1665.94" y="170.45" width="1.21" height="1.7" fill="#000000" fill-opacity="0.45"/><rect x="1667.50" y="170.45" width="1.21" height="1.7" fill="#000000" fill-opacity="0.45"/><rect x="1669.06" y="170.45" width="1.21" height="1.7" fill="#000000" fill-opacity="0.45"/><rect x="1670.62" y="170.45" width="1.21" height="1.7" fill="#000000" fill-opacity="0.45"/><rect x="1672.18" y="170.45" width="1.21" height="1.7" fill="#000000" fill-opacity="0.45"/><rect x="1673.74" y="170.45" width="1.21" height="1.7" fill="#000000" fill-opacity="0.45"/><rect x="1675.30" y="170.45" width="1.21" height="1.7" fill="#000000" fill-opacity="0.45"/><rect x="1676.86" y="170.45" width="1.21" height="1.7" fill="#000000" fill-opacity="0.45"/><rect x="1678.42" y="170.45" width="1.21" height="1.7" fill="#000000" fill-opacity="0.45"/><rect x="1679.98" y="170.45" width="1.21" height="1.7" fill="#000000" fill-opacity="0.45"/><rect x="1681.54" y="170.45" width="1.21" height="1.7" fill="#000000" fill-opacity="0.45"/><rect x="1683.10" y="170.45" width="1.21" height="1.7" fill="#000000" fill-opacity="0.45"/><rect x="1684.66" y="170.45" width="1.21" height="1.7" fill="#000000" fill-opacity="0.45"/><rect x="1686.22" y="170.45" width="1.21" height="1.7" fill="#000000" fill-opacity="0.45"/><rect x="1665.94" y="173.60" width="1.21" height="1.7" fill="#000000" fill-opacity="0.45"/><rect x="1667.50" y="173.60" width="1.21" height="1.7" fill="#000000" fill-opacity="0.45"/><rect x="1669.06" y="173.60" width="1.21" height="1.7" fill="#000000" fill-opacity="0.45"/><rect x="1670.62" y="173.60" width="1.21" height="1.7" fill="#000000" fill-opacity="0.45"/><rect x="1672.18" y="173.60" width="1.21" height="1.7" fill="#000000" fill-opacity="0.45"/><rect x="1673.74" y="173.60" width="1.21" height="1.7" fill="#000000" fill-opacity="0.45"/><rect x="1675.30" y="173.60" width="1.21" height="1.7" fill="#000000" fill-opacity="0.45"/><rect x="1676.86" y="173.60" width="1.21" height="1.7" fill="#000000" fill-opacity="0.45"/><rect x="1678.42" y="173.60" width="1.21" height="1.7" fill="#000000" fill-opacity="0.45"/><rect x="1679.98" y="173.60" width="1.21" height="1.7" fill="#000000" fill-opacity="0.45"/><rect x="1681.54" y="173.60" width="1.21" height="1.7" fill="#000000" fill-opacity="0.45"/><rect x="1683.10" y="173.60" width="1.21" height="1.7" fill="#000000" fill-opacity="0.45"/><rect x="1684.66" y="173.60" width="1.21" height="1.7" fill="#000000" fill-opacity="0.45"/><rect x="1686.22" y="173.60" width="1.21" height="1.7" fill="#000000" fill-opacity="0.45"/><rect x="1687.78" y="173.60" width="1.21" height="1.7" fill="#000000" fill-opacity="0.45"/><rect x="1689.34" y="173.60" width="1.21" height="1.7" fill="#000000" fill-opacity="0.45"/><rect x="1662.82" y="176.75" width="1.21" height="1.7" fill="#8a5a1a" fill-opacity="0.6"/><rect x="1664.38" y="176.75" width="1.21" height="1.7" fill="#000000" fill-opacity="0.45"/><rect x="1662.82" y="179.90" width="1.21" height="1.7" fill="#000000" fill-opacity="0.45"/><rect x="1664.38" y="179.90" width="1.21" height="1.7" fill="#000000" fill-opacity="0.45"/><rect x="1665.94" y="179.90" width="1.21" height="1.7" fill="#000000" fill-opacity="0.45"/><rect x="1667.50" y="179.90" width="1.21" height="1.7" fill="#000000" fill-opacity="0.45"/><rect x="1669.06" y="179.90" width="1.21" height="1.7" fill="#000000" fill-opacity="0.45"/><rect x="1670.62" y="179.90" width="1.21" height="1.7" fill="#000000" fill-opacity="0.45"/><rect x="1672.18" y="179.90" width="1.21" height="1.7" fill="#000000" fill-opacity="0.45"/><rect x="1673.74" y="179.90" width="1.21" height="1.7" fill="#000000" fill-opacity="0.45"/><rect x="1675.30" y="179.90" width="1.21" height="1.7" fill="#000000" fill-opacity="0.45"/><rect x="1676.86" y="179.90" width="1.21" height="1.7" fill="#000000" fill-opacity="0.45"/><rect x="1679.98" y="179.90" width="1.21" height="1.7" fill="#8a5a1a" fill-opacity="0.6"/><rect x="1681.54" y="179.90" width="1.21" height="1.7" fill="#8a5a1a" fill-opacity="0.6"/><rect x="1683.10" y="179.90" width="1.21" height="1.7" fill="#000000" fill-opacity="0.45"/><rect x="1662.82" y="183.05" width="1.21" height="1.7" fill="#000000" fill-opacity="0.45"/><rect x="1664.38" y="183.05" width="1.21" height="1.7" fill="#000000" fill-opacity="0.45"/><rect x="1665.94" y="183.05" width="1.21" height="1.7" fill="#000000" fill-opacity="0.45"/><rect x="1667.50" y="183.05" width="1.21" height="1.7" fill="#000000" fill-opacity="0.45"/><rect x="1669.06" y="183.05" width="1.21" height="1.7" fill="#000000" fill-opacity="0.45"/><rect x="1670.62" y="183.05" width="1.21" height="1.7" fill="#000000" fill-opacity="0.45"/><rect x="1672.18" y="183.05" width="1.21" height="1.7" fill="#000000" fill-opacity="0.45"/><rect x="1673.74" y="183.05" width="1.21" height="1.7" fill="#000000" fill-opacity="0.45"/><rect x="1675.30" y="183.05" width="1.21" height="1.7" fill="#000000" fill-opacity="0.45"/><rect x="1676.86" y="183.05" width="1.21" height="1.7" fill="#000000" fill-opacity="0.45"/><rect x="1679.98" y="183.05" width="1.21" height="1.7" fill="#8a5a1a" fill-opacity="0.6"/><rect x="1681.54" y="183.05" width="1.21" height="1.7" fill="#000000" fill-opacity="0.45"/><rect x="1683.10" y="183.05" width="1.21" height="1.7" fill="#000000" fill-opacity="0.45"/><rect x="1684.66" y="183.05" width="1.21" height="1.7" fill="#000000" fill-opacity="0.45"/><rect x="1686.22" y="183.05" width="1.21" height="1.7" fill="#000000" fill-opacity="0.45"/><rect x="1687.78" y="183.05" width="1.21" height="1.7" fill="#000000" fill-opacity="0.45"/><rect x="1689.34" y="183.05" width="1.21" height="1.7" fill="#000000" fill-opacity="0.45"/><rect x="1690.90" y="183.05" width="1.21" height="1.7" fill="#000000" fill-opacity="0.45"/><rect x="1692.46" y="183.05" width="1.21" height="1.7" fill="#000000" fill-opacity="0.45"/><rect x="1694.02" y="183.05" width="1.21" height="1.7" fill="#000000" fill-opacity="0.45"/><rect x="1695.58" y="183.05" width="1.21" height="1.7" fill="#000000" fill-opacity="0.45"/><rect x="1697.14" y="183.05" width="1.21" height="1.7" fill="#000000" fill-opacity="0.45"/><rect x="1698.70" y="183.05" width="1.21" height="1.7" fill="#000000" fill-opacity="0.45"/><rect x="1700.26" y="183.05" width="1.21" height="1.7" fill="#8a5a1a" fill-opacity="0.6"/><rect x="1659.70" y="186.20" width="1.21" height="1.7" fill="#17a017" fill-opacity="0.6"/><rect x="1661.26" y="186.20" width="1.21" height="1.7" fill="#6200ea" fill-opacity="0.6"/><rect x="1659.70" y="189.35" width="1.21" height="1.7" fill="#6200ea" fill-opacity="0.6"/><rect x="1661.26" y="189.35" width="1.21" height="1.7" fill="#6200ea" fill-opacity="0.6"/><rect x="1662.82" y="189.35" width="1.21" height="1.7" fill="#6200ea" fill-opacity="0.6"/><rect x="1664.38" y="189.35" width="1.21" height="1.7" fill="#6200ea" fill-opacity="0.6"/><rect x="1665.94" y="189.35" width="1.21" height="1.7" fill="#6200ea" fill-opacity="0.6"/><rect x="1667.50" y="189.35" width="1.21" height="1.7" fill="#6200ea" fill-opacity="0.6"/><rect x="1670.62" y="189.35" width="1.21" height="1.7" fill="#6200ea" fill-opacity="0.6"/><rect x="1672.18" y="189.35" width="1.21" height="1.7" fill="#6200ea" fill-opacity="0.6"/><rect x="1673.74" y="189.35" width="1.21" height="1.7" fill="#6200ea" fill-opacity="0.6"/><rect x="1675.30" y="189.35" width="1.21" height="1.7" fill="#6200ea" fill-opacity="0.6"/><rect x="1676.86" y="189.35" width="1.21" height="1.7" fill="#6200ea" fill-opacity="0.6"/><rect x="1679.98" y="189.35" width="1.21" height="1.7" fill="#000000" fill-opacity="0.45"/><rect x="1681.54" y="189.35" width="1.21" height="1.7" fill="#000000" fill-opacity="0.45"/><rect x="1683.10" y="189.35" width="1.21" height="1.7" fill="#000000" fill-opacity="0.45"/><rect x="1684.66" y="189.35" width="1.21" height="1.7" fill="#000000" fill-opacity="0.45"/><rect x="1686.22" y="189.35" width="1.21" height="1.7" fill="#000000" fill-opacity="0.45"/><rect x="1687.78" y="189.35" width="1.21" height="1.7" fill="#000000" fill-opacity="0.45"/><rect x="1689.34" y="189.35" width="1.21" height="1.7" fill="#000000" fill-opacity="0.45"/><rect x="1690.90" y="189.35" width="1.21" height="1.7" fill="#000000" fill-opacity="0.45"/><rect x="1692.46" y="189.35" width="1.21" height="1.7" fill="#000000" fill-opacity="0.45"/><rect x="1695.58" y="189.35" width="1.21" height="1.7" fill="#6200ea" fill-opacity="0.6"/><rect x="1698.70" y="189.35" width="1.21" height="1.7" fill="#6200ea" fill-opacity="0.6"/></svg>
<div style="position:absolute;left:1666px;top:160.60000000000002px;width:23.5px;height:2.6px;background:#c8c8c8;"></div>
<div style="position:absolute;left:1655px;top:144.75px;width:2px;height:3px;background:#2ea45a;"></div>
<div style="position:absolute;left:1655px;top:156.95000000000002px;width:2.2px;height:6.8999999999999995px;background:#3b7fd6;"></div>
<div style="position:absolute;left:1813.7px;top:129.2px;width:22.3px;height:288px;background:#c4c4c4;"></div>
<div style="position:absolute;left:1813.7px;top:417px;width:1px;height:285px;background:#ececec;"></div>
<div style="position:absolute;left:1814px;top:200px;width:7.3px;height:13.4px;background:#86ad8e;"></div>
<div style="position:absolute;left:1821.3px;top:200px;width:7.7px;height:13.4px;background:#ad92ad;"></div>
<div style="position:absolute;left:1814px;top:256.3px;width:7.3px;height:29px;background:#73a0c8;"></div>
<div style="position:absolute;left:1821.3px;top:271.6px;width:7.7px;height:13.7px;background:#9a9a9a;"></div>
<div style="position:absolute;left:1814px;top:269.2px;width:22px;height:2.4px;background:#555555;"></div>
<div style="position:absolute;left:478px;top:702.3px;width:1358px;height:1.2px;background:#d9d9d9;"></div>
<div style="position:absolute;left:509.8px;top:722.977px;line-height:18.542px;font:normal 400 16.6px 'Liberation Sans', sans-serif;line-height:18.542px;color:#717171;white-space:pre;letter-spacing:0.112px;">PROBLEMS</div>
<div style="position:absolute;left:641.8px;top:722.977px;line-height:18.542px;font:normal 400 16.6px 'Liberation Sans', sans-serif;line-height:18.542px;color:#424242;white-space:pre;letter-spacing:0.656px;">OUTPUT</div>
<div style="position:absolute;left:752.2px;top:722.977px;line-height:18.542px;font:normal 400 16.6px 'Liberation Sans', sans-serif;line-height:18.542px;color:#717171;white-space:pre;letter-spacing:0.31px;">DEBUG CONSOLE</div>
<div style="position:absolute;left:638.6px;top:750.0px;width:78.7px;height:1.7px;background:#424242;"></div>
<svg style="position:absolute;left:1740px;top:715px;overflow:visible" width="96" height="30" viewBox="0 0 96 30"><path d="M11.2 18.4 L18.7 10.9 L26.2 18.4" fill="none" stroke="#424242" stroke-width="1.7"/><path d="M53.2 8.9 L66.2 21.7 M66.2 8.9 L53.2 21.7" stroke="#424242" stroke-width="1.7"/></svg>
<div style="position:absolute;left:478px;top:757px;width:1289px;height:34.6px;background:#e5e5e5;"></div>
<div style="position:absolute;left:1767px;top:757px;width:69px;height:288px;background:#e5e5e5;"></div>
<div style="position:absolute;left:1767px;top:757px;width:1.3px;height:288px;background:#c8c8c8;"></div>
<div style="position:absolute;left:1801.8px;top:757px;width:1.3px;height:288px;background:#c8c8c8;"></div>
<svg style="position:absolute;left:484.2px;top:764.6px;overflow:visible" width="20" height="20" viewBox="0 0 20 20"><path d="M2.4000000000000004 5.8 L10 14.2 L17.6 5.8" fill="none" stroke="#424242" stroke-width="1.7"/></svg>
<div style="position:absolute;left:509.8px;top:765.491px;line-height:19.883px;font:normal 700 17.8px 'Liberation Sans', sans-serif;line-height:19.883px;color:#616161;white-space:pre;letter-spacing:0.02px;">TERMINAL</div>
<svg style="position:absolute;left:1776.3px;top:762.5px;overflow:visible" width="20" height="20" viewBox="0 0 20 20"><path d="M5.8 2.5 L14.2 10 L5.8 17.5" fill="none" stroke="#424242" stroke-width="1.7"/></svg>
<svg style="position:absolute;left:1811px;top:762.5px;overflow:visible" width="20" height="20" viewBox="0 0 20 20"><path d="M5.8 2.5 L14.2 10 L5.8 17.5" fill="none" stroke="#424242" stroke-width="1.7"/></svg>
<svg style="position:absolute;left:1775px;top:794px;overflow:visible" width="22" height="27" viewBox="0 0 22 27"><g fill="none" stroke="#424242" stroke-width="1.7"><rect x="1.9" y="3" width="17.8" height="22.5" rx="2"/><path d="M6 10.5 H15.5 M6 15 H15.5 M6 19.5 H15.5"/><path d="M5.5 0.8 V3.5 M9.2 0.8 V3.5 M12.9 0.8 V3.5 M16.6 0.8 V3.5"/></g></svg>
<svg style="position:absolute;left:1807px;top:795px;overflow:visible" width="27" height="25" viewBox="0 0 27 25"><path d="M8.5 1.5 H15 L9.5 17 L14.5 22.5 H1.5 Z" fill="#424242"/><path d="M15.5 1.5 H19.5 L25 22.5 H17 L11 4.5 Z" fill="none" stroke="#424242" stroke-width="1.5" stroke-linejoin="round"/></svg>
<div style="position:absolute;left:1751.1px;top:802.6px;width:4.6px;height:9.2px;background:#3b7fd6;"></div>
<div style="position:absolute;left:1751.1px;top:925px;width:4.6px;height:18px;background:#c8c8c8;"></div>
<div style="position:absolute;left:510.5px;top:805.74px;line-height:20.759px;font:normal 400 18.33px 'Liberation Mono', monospace;line-height:20.759px;color:#333333;white-space:pre;-webkit-text-stroke:0.3px currentColor;transform:scaleY(1.06);transform-origin:0 74%"><span style="color:#333333">neilhaddley@Neils-MacBook-Air-2 haddley-angular-phaser % ng generate component bounce</span></div>
<div style="position:absolute;left:510.5px;top:827.74px;line-height:20.759px;font:normal 400 18.33px 'Liberation Mono', monospace;line-height:20.759px;color:#333333;white-space:pre;-webkit-text-stroke:0.3px currentColor;transform:scaleY(1.06);transform-origin:0 74%"><span style="color:#00a000">CREATE</span><span style="color:#333333"> src/app/bounce/bounce.component.scss (0 bytes)</span></div>
<div style="position:absolute;left:510.5px;top:849.74px;line-height:20.759px;font:normal 400 18.33px 'Liberation Mono', monospace;line-height:20.759px;color:#333333;white-space:pre;-webkit-text-stroke:0.3px currentColor;transform:scaleY(1.06);transform-origin:0 74%"><span style="color:#00a000">CREATE</span><span style="color:#333333"> src/app/bounce/bounce.component.html (21 bytes)</span></div>
<div style="position:absolute;left:510.5px;top:871.74px;line-height:20.759px;font:normal 400 18.33px 'Liberation Mono', monospace;line-height:20.759px;color:#333333;white-space:pre;-webkit-text-stroke:0.3px currentColor;transform:scaleY(1.06);transform-origin:0 74%"><span style="color:#00a000">CREATE</span><span style="color:#333333"> src/app/bounce/bounce.component.spec.ts (599 bytes)</span></div>
<div style="position:absolute;left:510.5px;top:893.74px;line-height:20.759px;font:normal 400 18.33px 'Liberation Mono', monospace;line-height:20.759px;color:#333333;white-space:pre;-webkit-text-stroke:0.3px currentColor;transform:scaleY(1.06);transform-origin:0 74%"><span style="color:#00a000">CREATE</span><span style="color:#333333"> src/app/bounce/bounce.component.ts (276 bytes)</span></div>
<div style="position:absolute;left:510.5px;top:915.74px;line-height:20.759px;font:normal 400 18.33px 'Liberation Mono', monospace;line-height:20.759px;color:#333333;white-space:pre;-webkit-text-stroke:0.3px currentColor;transform:scaleY(1.06);transform-origin:0 74%"><span style="color:#1c6ea8">UPDATE</span><span style="color:#333333"> src/app/app.module.ts (475 bytes)</span></div>
<div style="position:absolute;left:510.5px;top:937.74px;line-height:20.759px;font:normal 400 18.33px 'Liberation Mono', monospace;line-height:20.759px;color:#333333;white-space:pre;-webkit-text-stroke:0.3px currentColor;transform:scaleY(1.06);transform-origin:0 74%"><span style="color:#333333">neilhaddley@Neils-MacBook-Air-2 haddley-angular-phaser % </span></div>
<div style="position:absolute;left:489.6px;top:807.6px;width:12.2px;height:12.2px;border-radius:50%;background:#3f7fe0"></div>
<div style="position:absolute;left:489.8px;top:939.8px;width:11.8px;height:11.8px;border-radius:50%;box-sizing:border-box;border:1.8px solid #9a9a9a"></div>
<div style="position:absolute;left:1138.0px;top:934.9px;width:11px;height:21.8px;box-sizing:border-box;border:1.5px solid #333333"></div>
</body></html>
